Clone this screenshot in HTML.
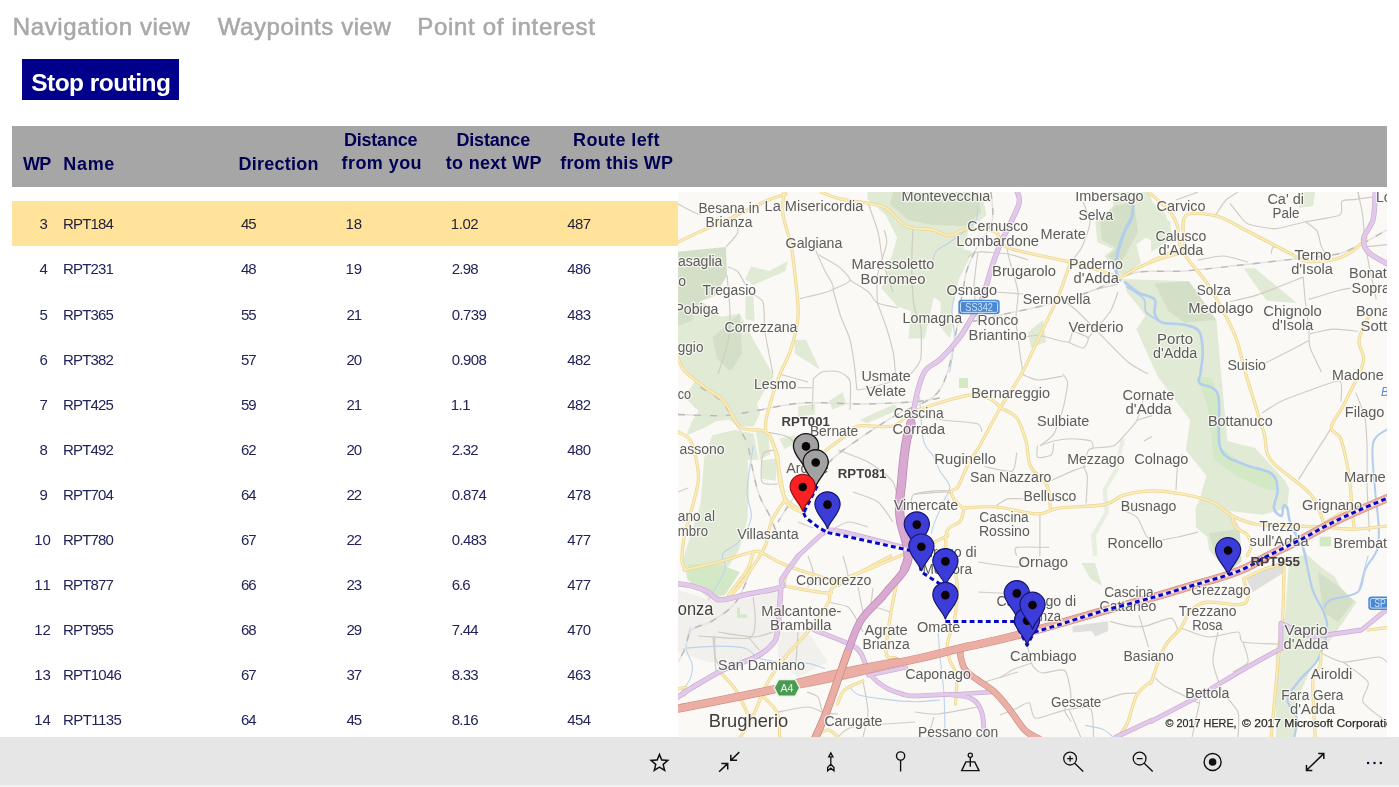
<!DOCTYPE html>
<html lang="en"><head><meta charset="utf-8"><title>Waypoints view</title>
<style>
*{margin:0;padding:0;box-sizing:border-box}
html,body{width:1399px;height:787px;overflow:hidden;background:#fff;font-family:"Liberation Sans",sans-serif}
#app{position:relative;width:1399px;height:787px;overflow:hidden;background:#fff;will-change:transform;opacity:0.9999}
.t{position:absolute;white-space:nowrap;line-height:1}
.tab{color:#a8a8a8;font-weight:400;-webkit-text-stroke:0.55px #a8a8a8}
.btn{color:#fff;font-weight:700}
.th{color:#000054;font-weight:700}
.td{color:#23235c;font-weight:400}
.td1{color:#221e34}
#stop{position:absolute;left:22px;top:59px;width:157px;height:41px;background:#00008b;border:0;padding:0;font:inherit;text-align:left;overflow:hidden}
#thead{position:absolute;left:12px;top:126px;width:1375px;height:61px;background:#a6a6a6}
#sel{position:absolute;left:12px;top:201px;width:666px;height:44.5px;background:#ffe39b}
#map{position:absolute;left:678px;top:192px;width:709px;height:545px;overflow:hidden;background:#f8f7f3}
#map svg{display:block}
#bar{position:absolute;left:0;top:737px;width:1399px;height:48.2px;background:#e6e6e6}
#barline{position:absolute;left:0;top:785.2px;width:1399px;height:1.8px;background:#f3f3f3}
#bar svg{position:absolute;left:0;top:0}
</style></head>
<body><div id="app">
<nav id="tabs">
<span class="t tab" style="left:12.70px;top:14.68px;font-size:24px;letter-spacing:0.654px">Navigation view</span>
<span class="t tab" style="left:217.70px;top:14.68px;font-size:24px;letter-spacing:0.562px">Waypoints view</span>
<span class="t tab" style="left:417.30px;top:14.68px;font-size:24px;letter-spacing:0.682px">Point of interest</span>
</nav>
<button id="stop" type="button"><span class="t btn" style="left:9.20px;top:11.76px;font-size:24.5px;letter-spacing:-0.530px">Stop routing</span></button>
<div id="thead"></div>
<span class="t th" style="left:23.00px;top:154.76px;font-size:18px;letter-spacing:-0.689px">WP</span>
<span class="t th" style="left:63.30px;top:154.76px;font-size:18px;letter-spacing:0.662px">Name</span>
<span class="t th" style="left:238.50px;top:154.76px;font-size:18px;letter-spacing:0.248px">Direction</span>
<span class="t th" style="left:343.90px;top:131.16px;font-size:18px;letter-spacing:-0.203px">Distance</span>
<span class="t th" style="left:341.60px;top:154.36px;font-size:18px;letter-spacing:0.428px">from you</span>
<span class="t th" style="left:456.40px;top:131.16px;font-size:18px;letter-spacing:-0.174px">Distance</span>
<span class="t th" style="left:445.80px;top:154.36px;font-size:18px;letter-spacing:0.301px">to next WP</span>
<span class="t th" style="left:573.00px;top:131.16px;font-size:18px;letter-spacing:0.378px">Route left</span>
<span class="t th" style="left:560.30px;top:154.36px;font-size:18px;letter-spacing:0.155px">from this WP</span>
<div id="sel"></div>
<div id="rows">
<span class="t td td1" style="left:39.41px;top:216.30px;font-size:15px;letter-spacing:0.000px">3</span>
<span class="t td td1" style="left:63.00px;top:216.30px;font-size:15px;letter-spacing:-0.849px">RPT184</span>
<span class="t td td1" style="left:241.00px;top:216.30px;font-size:15px;letter-spacing:-1.082px">45</span>
<span class="t td td1" style="left:345.60px;top:216.30px;font-size:15px;letter-spacing:-0.082px">18</span>
<span class="t td td1" style="left:450.70px;top:216.30px;font-size:15px;letter-spacing:-0.404px">1.02</span>
<span class="t td td1" style="left:567.30px;top:216.30px;font-size:15px;letter-spacing:-0.672px">487</span>
<span class="t td" style="left:39.41px;top:261.40px;font-size:15px;letter-spacing:0.000px">4</span>
<span class="t td" style="left:63.00px;top:261.40px;font-size:15px;letter-spacing:-0.849px">RPT231</span>
<span class="t td" style="left:241.00px;top:261.40px;font-size:15px;letter-spacing:-1.082px">48</span>
<span class="t td" style="left:345.60px;top:261.40px;font-size:15px;letter-spacing:-0.082px">19</span>
<span class="t td" style="left:451.70px;top:261.40px;font-size:15px;letter-spacing:-0.737px">2.98</span>
<span class="t td" style="left:567.30px;top:261.40px;font-size:15px;letter-spacing:-0.672px">486</span>
<span class="t td" style="left:39.41px;top:306.50px;font-size:15px;letter-spacing:0.000px">5</span>
<span class="t td" style="left:63.00px;top:306.50px;font-size:15px;letter-spacing:-0.849px">RPT365</span>
<span class="t td" style="left:241.00px;top:306.50px;font-size:15px;letter-spacing:-1.082px">55</span>
<span class="t td" style="left:346.60px;top:306.50px;font-size:15px;letter-spacing:-1.082px">21</span>
<span class="t td" style="left:451.70px;top:306.50px;font-size:15px;letter-spacing:-0.619px">0.739</span>
<span class="t td" style="left:567.30px;top:306.50px;font-size:15px;letter-spacing:-0.672px">483</span>
<span class="t td" style="left:39.41px;top:351.60px;font-size:15px;letter-spacing:0.000px">6</span>
<span class="t td" style="left:63.00px;top:351.60px;font-size:15px;letter-spacing:-0.849px">RPT382</span>
<span class="t td" style="left:241.00px;top:351.60px;font-size:15px;letter-spacing:-1.082px">57</span>
<span class="t td" style="left:346.60px;top:351.60px;font-size:15px;letter-spacing:-1.082px">20</span>
<span class="t td" style="left:451.70px;top:351.60px;font-size:15px;letter-spacing:-0.619px">0.908</span>
<span class="t td" style="left:567.30px;top:351.60px;font-size:15px;letter-spacing:-0.672px">482</span>
<span class="t td" style="left:39.41px;top:396.70px;font-size:15px;letter-spacing:0.000px">7</span>
<span class="t td" style="left:63.00px;top:396.70px;font-size:15px;letter-spacing:-0.849px">RPT425</span>
<span class="t td" style="left:241.00px;top:396.70px;font-size:15px;letter-spacing:-1.082px">59</span>
<span class="t td" style="left:346.60px;top:396.70px;font-size:15px;letter-spacing:-1.082px">21</span>
<span class="t td" style="left:450.70px;top:396.70px;font-size:15px;letter-spacing:-0.475px">1.1</span>
<span class="t td" style="left:567.30px;top:396.70px;font-size:15px;letter-spacing:-0.672px">482</span>
<span class="t td" style="left:39.41px;top:441.80px;font-size:15px;letter-spacing:0.000px">8</span>
<span class="t td" style="left:63.00px;top:441.80px;font-size:15px;letter-spacing:-0.849px">RPT492</span>
<span class="t td" style="left:241.00px;top:441.80px;font-size:15px;letter-spacing:-1.082px">62</span>
<span class="t td" style="left:346.60px;top:441.80px;font-size:15px;letter-spacing:-1.082px">20</span>
<span class="t td" style="left:451.70px;top:441.80px;font-size:15px;letter-spacing:-0.737px">2.32</span>
<span class="t td" style="left:567.30px;top:441.80px;font-size:15px;letter-spacing:-0.672px">480</span>
<span class="t td" style="left:39.41px;top:486.90px;font-size:15px;letter-spacing:0.000px">9</span>
<span class="t td" style="left:63.00px;top:486.90px;font-size:15px;letter-spacing:-0.849px">RPT704</span>
<span class="t td" style="left:241.00px;top:486.90px;font-size:15px;letter-spacing:-1.082px">64</span>
<span class="t td" style="left:346.60px;top:486.90px;font-size:15px;letter-spacing:-1.082px">22</span>
<span class="t td" style="left:451.70px;top:486.90px;font-size:15px;letter-spacing:-0.619px">0.874</span>
<span class="t td" style="left:567.30px;top:486.90px;font-size:15px;letter-spacing:-0.672px">478</span>
<span class="t td" style="left:34.37px;top:532.00px;font-size:15px;letter-spacing:-0.082px">10</span>
<span class="t td" style="left:63.00px;top:532.00px;font-size:15px;letter-spacing:-0.849px">RPT780</span>
<span class="t td" style="left:241.00px;top:532.00px;font-size:15px;letter-spacing:-1.082px">67</span>
<span class="t td" style="left:346.60px;top:532.00px;font-size:15px;letter-spacing:-1.082px">22</span>
<span class="t td" style="left:451.70px;top:532.00px;font-size:15px;letter-spacing:-0.619px">0.483</span>
<span class="t td" style="left:567.30px;top:532.00px;font-size:15px;letter-spacing:-0.672px">477</span>
<span class="t td" style="left:34.37px;top:577.10px;font-size:15px;letter-spacing:1.031px">11</span>
<span class="t td" style="left:63.00px;top:577.10px;font-size:15px;letter-spacing:-0.849px">RPT877</span>
<span class="t td" style="left:241.00px;top:577.10px;font-size:15px;letter-spacing:-1.082px">66</span>
<span class="t td" style="left:346.60px;top:577.10px;font-size:15px;letter-spacing:-1.082px">23</span>
<span class="t td" style="left:451.70px;top:577.10px;font-size:15px;letter-spacing:-0.975px">6.6</span>
<span class="t td" style="left:567.30px;top:577.10px;font-size:15px;letter-spacing:-0.672px">477</span>
<span class="t td" style="left:34.37px;top:622.20px;font-size:15px;letter-spacing:-0.082px">12</span>
<span class="t td" style="left:63.00px;top:622.20px;font-size:15px;letter-spacing:-0.849px">RPT955</span>
<span class="t td" style="left:241.00px;top:622.20px;font-size:15px;letter-spacing:-1.082px">68</span>
<span class="t td" style="left:346.60px;top:622.20px;font-size:15px;letter-spacing:-1.082px">29</span>
<span class="t td" style="left:451.70px;top:622.20px;font-size:15px;letter-spacing:-0.737px">7.44</span>
<span class="t td" style="left:567.30px;top:622.20px;font-size:15px;letter-spacing:-0.672px">470</span>
<span class="t td" style="left:34.37px;top:667.30px;font-size:15px;letter-spacing:-0.082px">13</span>
<span class="t td" style="left:63.00px;top:667.30px;font-size:15px;letter-spacing:-0.751px">RPT1046</span>
<span class="t td" style="left:241.00px;top:667.30px;font-size:15px;letter-spacing:-1.082px">67</span>
<span class="t td" style="left:346.60px;top:667.30px;font-size:15px;letter-spacing:-1.082px">37</span>
<span class="t td" style="left:451.70px;top:667.30px;font-size:15px;letter-spacing:-0.737px">8.33</span>
<span class="t td" style="left:567.30px;top:667.30px;font-size:15px;letter-spacing:-0.672px">463</span>
<span class="t td" style="left:34.37px;top:712.40px;font-size:15px;letter-spacing:-0.082px">14</span>
<span class="t td" style="left:63.00px;top:712.40px;font-size:15px;letter-spacing:-0.566px">RPT1135</span>
<span class="t td" style="left:241.00px;top:712.40px;font-size:15px;letter-spacing:-1.082px">64</span>
<span class="t td" style="left:346.60px;top:712.40px;font-size:15px;letter-spacing:-1.082px">45</span>
<span class="t td" style="left:451.70px;top:712.40px;font-size:15px;letter-spacing:-0.737px">8.16</span>
<span class="t td" style="left:567.30px;top:712.40px;font-size:15px;letter-spacing:-0.672px">454</span>
</div>
<div id="map">
<svg width="709" height="545" viewBox="0 0 709 545" font-family="Liberation Sans, sans-serif">
<rect width="709" height="545" fill="#faf9f6"/>
<path d="M0.0,398.0 L40.0,410.0 L76.0,405.0 L100.0,398.0 L98.0,440.0 L90.0,456.0 L70.0,470.0 L30.0,470.0 L0.0,460.0Z" fill="#f1f0ed"/>
<path d="M100.0,440.0 L130.0,440.0 L150.0,470.0 L120.0,485.0 L100.0,470.0Z" fill="#f1f0ed"/>
<path d="M567.3,384.8 L603.5,369.5 L605.4,381.0 L574.9,400.0Z" fill="#dfdfdd"/>
<path d="M394.6,434.1 L430.2,429.3 L430.2,439.0 L417.2,444.6 L414.0,439.0 L394.6,440.6Z" fill="#dfdfdd"/>
<path d="M0.0,59.7 L48.0,55.0 L49.0,83.7 L36.6,104.0 L22.9,108.9 L13.7,129.4 L0.0,134.0Z" fill="#d3e0c7"/>
<path d="M0.0,134.0 L13.7,129.4 L22.9,108.9 L43.4,124.9 L61.7,121.4 L75.4,147.7 L96.0,184.3 L86.9,198.0 L75.4,218.0 L50.3,218.0 L45.7,204.9 L22.9,198.0 L0.0,168.3Z" fill="#e0ead5"/>
<path d="M34.3,145.4 L61.7,121.4 L64.0,161.4 L52.6,179.7 L38.9,166.0Z" fill="#d3e0c7"/>
<path d="M73.1,74.6 L91.4,79.1 L109.7,68.9 L107.4,79.1 L75.4,92.9 L67.4,87.1Z" fill="#e0ead5"/>
<path d="M67.4,104.3 L75.4,104.3 L76.6,129.4 L67.4,127.1Z" fill="#e0ead5"/>
<path d="M116.6,147.7 L128.0,147.7 L141.7,177.4 L116.6,161.4Z" fill="#e0ead5"/>
<path d="M189.4,0.0 L303.8,0.0 L308.4,22.9 L290.0,38.9 L285.5,57.2 L294.7,59.5 L281.0,86.9 L274.0,119.0 L276.4,128.0 L271.8,146.4 L262.6,135.0 L262.6,109.8 L255.8,105.2 L246.6,146.4 L230.6,146.4 L232.9,119.0 L219.2,114.4 L203.2,96.0 L205.5,91.5 L219.2,45.7 L207.7,22.9 L189.4,6.9Z" fill="#e0ead5"/>
<path d="M215.0,0.0 L300.0,0.0 L303.0,20.0 L288.0,34.0 L255.0,33.0 L230.0,28.0 L212.0,12.0Z" fill="#d3e0c7"/>
<path d="M433.2,0.0 L472.0,0.0 L476.6,22.9 L492.6,29.7 L492.6,41.2 L478.9,50.3 L467.5,45.7 L458.3,52.6 L462.9,70.9 L444.6,84.6 L437.7,77.8 L426.3,64.0 L435.5,57.2 L419.4,50.3 L417.2,29.7 L435.5,13.7Z" fill="#e0ead5"/>
<path d="M437.0,14.0 L456.0,10.0 L460.0,40.0 L448.0,62.0 L440.0,75.0 L430.0,64.0 L438.0,56.0 L424.0,48.0 L422.0,30.0Z" fill="#d3e0c7"/>
<path d="M444.6,86.9 L510.9,89.2 L538.4,128.0 L543.0,180.0 L549.3,249.0 L577.0,256.0 L607.0,288.4 L611.1,297.1 L609.2,316.1 L584.5,322.8 L552.0,319.0 L517.7,316.1 L521.6,306.9 L528.5,283.7 L507.7,258.3 L512.3,228.2 L480.0,185.0 L458.3,137.2 L467.5,123.5 L449.2,100.6Z" fill="#e0ead5"/>
<path d="M476.6,91.5 L510.9,89.2 L538.4,128.0 L506.4,130.4 L490.4,119.0Z" fill="#d3e0c7"/>
<path d="M519.0,185.0 L533.0,185.0 L541.0,205.0 L543.0,256.0 L566.0,272.0 L594.0,282.0 L601.0,298.0 L590.0,298.0 L560.0,285.0 L536.0,268.0 L530.0,215.0Z" fill="#d3e9c6"/>
<path d="M517.7,316.1 L552.0,319.0 L561.6,335.2 L563.5,369.5 L550.1,381.0 L531.1,358.1 L529.2,344.7 L517.7,335.2Z" fill="#e0ead5"/>
<path d="M531.1,340.9 L561.6,337.1 L563.5,369.5 L550.0,380.0 L536.8,361.9Z" fill="#d3e0c7"/>
<path d="M473.0,9.0 L487.0,21.0 L496.0,46.0 L473.0,60.0Z" fill="#e0ead5"/>
<path d="M565.5,76.3 L577.0,76.3 L618.7,111.0 L588.6,108.7Z" fill="#e0ead5"/>
<path d="M621.0,0.0 L637.0,0.0 L635.0,14.0 L621.0,16.0Z" fill="#e0ead5"/>
<path d="M611.1,367.6 L628.3,361.9 L645.5,377.1 L656.9,384.8 L664.5,400.0 L678.8,410.2 L658.0,440.3 L634.9,472.7 L621.0,502.7 L616.4,545.0 L597.9,545.0 L597.9,456.5 L607.0,424.0 L609.4,392.0Z" fill="#e0ead5"/>
<path d="M640.0,380.0 L662.0,395.0 L676.0,409.0 L660.0,430.0 L645.0,420.0Z" fill="#d3e0c7"/>
<path d="M641.6,344.7 L653.1,344.7 L653.1,354.3 L641.6,354.3Z" fill="#d3e9c6"/>
<path d="M26.4,265.3 L69.1,256.1 L71.2,296.8 L69.1,329.3 L61.0,357.8 L40.7,390.3 L30.0,406.0 L10.0,388.0 L4.1,370.0 L22.4,313.0Z" fill="#e0ead5"/>
<path d="M83.4,268.3 L99.6,266.3 L97.6,288.7 L83.4,286.6Z" fill="#e0ead5"/>
<path d="M13.7,178.0 L89.2,178.0 L93.5,186.6 L82.3,195.2 L73.8,203.7 L78.9,212.3 L82.3,220.9 L75.5,234.6 L60.0,234.6 L51.5,227.8 L37.7,229.5 L25.7,236.3 L8.6,243.2 L13.7,229.5 L20.6,219.2 L6.9,205.4 L17.2,188.3Z" fill="#e0ead5"/>
<path d="M34.3,243.2 L56.6,238.0 L75.5,241.5 L80.6,268.0 L25.7,268.0Z" fill="#e0ead5"/>
<path d="M78.0,240.0 L90.0,240.0 L92.0,262.0 L82.0,268.0Z" fill="#e0ead5"/>
<path d="M120.1,214.0 L137.2,212.3 L137.2,222.6 L120.1,224.3Z" fill="#e0ead5"/>
<path d="M101.2,246.6 L116.7,243.2 L120.1,250.1 L106.4,256.9Z" fill="#e0ead5"/>
<path d="M151.0,208.9 L164.7,200.3 L168.1,212.3 L154.4,217.5Z" fill="#e0ead5"/>
<path d="M181.9,227.8 L216.2,212.3 L221.3,217.5 L188.7,231.2Z" fill="#e0ead5"/>
<path d="M10.2,372.0 L40.0,372.0 L62.0,380.0 L46.8,403.3 L34.6,405.3 L20.3,397.2 L9.2,387.0Z" fill="#d3e9c6"/>
<path d="M59.0,415.5 L62.0,415.5 L62.0,422.5 L69.1,422.5 L69.1,425.7 L59.0,425.7Z" fill="#d3e9c6"/>
<path d="M443.0,246.7 L447.0,246.7 L440.0,279.0 L429.0,298.0 L431.0,320.7 L418.0,343.8 L419.3,364.0 L415.0,364.0 L413.0,343.0 L426.6,320.0 L424.5,297.0 L436.0,278.0Z" fill="#e8efe0"/>
<path d="M403.5,371.0 L417.0,371.0 L424.0,394.0 L412.7,387.0Z" fill="#e0ead5"/>
<path d="M281.0,186.0 L290.0,186.0 L290.0,196.0 L281.0,196.0Z" fill="#d3e9c6"/>
<path d="M350.0,140.0 L365.0,128.0 L368.0,150.0 L353.0,156.0Z" fill="#e0ead5"/>
<g fill="none" stroke="#b3cdee" stroke-linecap="round" stroke-linejoin="round">
<path d="M454.9,13.7 C454.7,15.6 455.1,21.0 453.8,25.2 C452.5,29.4 449.2,33.2 446.9,38.9 C444.6,44.6 441.5,53.0 440.0,59.5 C438.5,66.0 437.3,73.0 437.7,77.8 C438.1,82.5 441.5,86.3 442.3,88.0" stroke-width="3.2"/>
<path d="M446.9,90.3 C449.2,92.0 455.7,97.7 460.6,100.6 C465.6,103.5 473.9,104.1 476.6,107.5 C479.3,110.9 475.5,117.4 476.6,121.2 C477.8,125.0 478.5,128.5 483.5,130.4 C488.5,132.3 500.1,131.2 506.4,132.7 C512.7,134.2 518.2,134.9 521.2,139.5 C524.2,144.1 524.5,153.0 524.7,160.1 C524.9,167.2 522.9,176.8 522.4,182.0 C521.9,187.2 518.7,187.7 521.6,191.2 C524.5,194.7 536.5,192.0 540.0,202.8 C543.5,213.6 538.1,244.4 542.4,256.0 C546.6,267.6 557.0,268.0 565.5,272.2 C574.0,276.4 587.5,277.2 593.2,281.4 C598.9,285.5 599.2,291.3 599.7,297.1 C600.2,302.9 595.3,311.7 595.9,316.1 C596.5,320.6 601.9,324.1 603.5,323.8 C605.1,323.5 604.4,315.5 605.4,314.2 C606.4,312.9 607.9,312.9 609.2,316.1 C610.5,319.3 610.5,326.9 613.0,333.3 C615.5,339.7 622.0,348.3 624.5,354.3 C627.0,360.3 627.7,367.0 628.3,369.5" stroke-width="2.6"/>
<path d="M449.0,95.0 C451.8,97.0 462.8,102.8 466.0,107.0 C469.2,111.2 465.1,116.1 468.0,120.0 C470.9,123.9 480.9,128.7 483.5,130.4" stroke-width="1.6"/>
<path d="M628.3,369.5 C629.4,374.4 631.9,390.0 634.9,398.7 C637.9,407.4 644.1,414.9 646.4,421.8 C648.7,428.7 649.9,432.6 648.7,440.3 C647.6,448.0 644.1,459.9 639.5,468.0 C634.9,476.1 626.0,482.3 621.0,488.9 C616.0,495.5 609.8,501.2 609.4,507.4 C609.0,513.6 617.5,519.6 618.7,525.9 C619.9,532.2 616.8,541.8 616.4,545.0" stroke-width="2.2"/>
<path d="M646.4,414.9 C647.5,413.7 647.5,410.1 653.1,407.6 C658.7,405.1 674.1,405.1 679.8,400.0 C685.5,394.9 684.2,384.1 687.4,377.1 C690.6,370.1 696.7,365.1 698.9,358.1 C701.1,351.1 701.1,345.4 700.8,335.2 C700.5,325.0 698.0,311.1 697.0,297.1 C696.0,283.1 693.0,261.3 695.0,251.4 C697.0,241.5 706.7,239.8 709.0,237.5" stroke-width="2.0"/>
</g>
<g fill="none" stroke="#bcd3ee" stroke-width="1.1" stroke-linecap="round">
<path d="M407.6,533.4 C410.6,534.1 420.7,535.6 425.3,537.5 C429.9,539.4 433.4,543.8 435.0,545.0"/>
<path d="M299.2,13.7 C298.8,16.4 301.6,23.6 297.0,29.7 C292.4,35.8 278.3,45.3 271.8,50.3 C265.3,55.3 261.1,55.3 258.0,59.5 C254.9,63.7 254.2,72.8 253.5,75.5"/>
<path d="M276.4,105.2 C276.0,107.5 274.0,112.1 274.0,119.0 C274.0,125.9 276.8,136.2 276.4,146.4 C276.0,156.6 272.6,174.4 271.8,180.0"/>
<path d="M241.6,205.0 C242.2,212.2 243.1,238.1 245.4,248.0 C247.7,257.9 252.8,259.2 255.5,264.3 C258.2,269.4 258.9,273.4 261.6,278.5 C264.3,283.6 271.1,289.7 271.8,294.8 C272.5,299.9 268.4,302.6 265.7,309.0 C263.0,315.4 257.5,328.0 255.5,333.4 C253.5,338.8 253.8,340.1 253.5,341.5"/>
<path d="M75.2,254.1 C74.2,261.6 69.4,286.9 69.1,298.8 C68.8,310.7 74.5,316.8 73.2,325.3 C71.9,333.8 65.8,343.5 61.0,349.6 C56.2,355.7 47.1,357.1 44.7,361.8 C42.3,366.6 49.2,370.4 46.8,378.1 C44.4,385.8 33.2,403.0 30.5,408.0"/>
<path d="M6.1,456.2 C11.9,455.9 30.5,454.1 40.7,454.1 C50.9,454.1 60.3,454.2 67.1,456.2 C73.9,458.2 74.9,463.9 81.3,466.3 C87.7,468.7 97.6,469.5 105.7,470.4 C113.8,471.2 123.3,470.4 130.1,471.4 C136.9,472.4 143.7,475.6 146.4,476.5"/>
<path d="M12.2,435.8 C11.5,439.2 7.8,450.1 8.1,456.2 C8.4,462.3 13.5,467.3 14.2,472.4 C14.9,477.5 13.9,482.2 12.2,486.6 C10.5,491.0 5.4,496.8 4.1,498.8"/>
<path d="M171.0,493.5 C172.6,495.0 174.1,500.4 180.3,502.7 C186.5,505.0 198.6,506.2 208.0,507.4 C217.4,508.6 228.0,509.6 237.0,509.7 C246.0,509.8 257.8,508.3 262.0,508.0"/>
<path d="M260.0,438.0 C260.4,443.0 261.4,457.2 262.4,468.0 C263.4,478.8 265.2,489.9 266.0,502.7 C266.8,515.5 266.8,538.0 267.0,545.0"/>
<path d="M690.0,364.0 L681.0,398.0"/>
</g>
<g fill="none" stroke="#cfccc4" stroke-width="1.15" stroke-linejoin="round">
<path d="M273.8,298.8 C271.9,298.8 262.1,298.3 257.6,298.8 C253.1,299.3 238.0,300.8 235.2,302.9 C232.4,305.0 233.4,315.4 233.2,317.1"/>
<path d="M36.6,444.0 C36.7,446.6 36.8,462.3 37.6,466.3 C38.4,470.3 43.0,477.1 43.7,478.5"/>
<path d="M20.3,444.0 C26.2,444.2 64.5,447.9 71.2,446.0 C77.9,444.1 76.8,432.4 77.3,427.7 C77.8,423.0 75.4,407.9 75.2,405.3"/>
<path d="M71.2,446.0 L81.3,458.2"/>
<path d="M50.0,75.0 C51.2,75.6 57.4,77.1 60.0,80.0 C62.6,82.9 69.1,96.5 72.0,100.0 C74.9,103.5 83.2,105.3 85.0,110.0 C86.8,114.7 85.8,131.6 87.0,140.0 C88.2,148.4 94.1,177.1 95.0,182.0"/>
<path d="M49.0,83.0 C49.4,87.3 51.9,112.2 52.0,120.0 C52.1,127.8 51.4,142.8 50.0,150.0 C48.6,157.2 41.2,178.3 40.0,182.0"/>
<path d="M0.0,12.0 C2.3,13.2 16.5,21.3 20.0,22.0 C23.5,22.7 28.8,18.5 30.0,18.0"/>
<path d="M55.0,25.0 C55.6,26.8 60.8,36.5 60.0,40.0 C59.2,43.5 49.4,53.2 48.0,55.0"/>
<path d="M190.0,11.0 C191.2,14.4 198.2,33.1 200.0,40.0 C201.8,46.9 203.2,63.0 205.0,70.0 C206.8,77.0 213.8,96.5 215.0,100.0"/>
<path d="M290.0,65.0 C291.2,64.4 295.3,60.4 300.0,60.0 C304.7,59.6 324.2,61.1 330.0,62.0 C335.8,62.9 347.7,67.3 350.0,68.0"/>
<path d="M300.0,60.0 C299.5,64.1 296.0,86.8 296.0,95.0 C296.0,103.2 299.5,125.9 300.0,130.0"/>
<path d="M329.0,57.0 C329.4,58.5 330.7,65.0 332.0,70.0 C333.3,75.0 339.3,93.0 340.0,100.0 C340.7,107.0 337.4,120.4 338.0,130.0 C338.6,139.6 344.2,175.9 345.0,182.0"/>
<path d="M318.0,100.0 L345.0,102.0"/>
<path d="M392.0,71.0 C393.4,69.1 401.7,59.8 404.0,55.0 C406.3,50.2 411.9,35.2 412.0,30.0 C412.1,24.8 405.8,12.3 405.0,10.0"/>
<path d="M380.0,104.0 C382.1,105.6 393.3,113.8 398.0,118.0 C402.7,122.2 413.9,133.9 420.0,140.0 C426.1,146.1 444.2,165.1 450.0,170.0 C455.8,174.9 467.7,180.6 470.0,182.0"/>
<path d="M412.0,99.0 L440.0,92.0"/>
<path d="M361.0,143.0 C364.4,143.8 386.0,150.3 390.0,150.0 C394.0,149.7 392.7,140.5 395.0,140.0 C397.3,139.5 408.8,144.1 410.0,146.0 C411.2,147.9 407.3,155.5 405.0,156.0 C402.7,156.5 391.8,150.7 390.0,150.0"/>
<path d="M345.0,145.0 L361.0,143.0"/>
<path d="M440.0,100.0 C439.1,102.3 435.5,114.6 432.0,120.0 C428.5,125.4 412.6,143.0 410.0,146.0"/>
<path d="M498.0,8.0 L520.0,0.0"/>
<path d="M537.0,24.0 C538.3,22.1 545.3,10.8 548.0,8.0 C550.7,5.2 558.6,0.9 560.0,0.0"/>
<path d="M520.0,68.0 C522.9,67.5 539.2,63.8 545.0,64.0 C550.8,64.2 567.1,69.3 570.0,70.0"/>
<path d="M498.0,298.0 C498.2,294.7 499.2,274.2 500.0,270.0 C500.8,265.8 504.4,262.9 505.0,262.0"/>
<path d="M473.0,350.0 C476.1,349.4 494.5,346.2 500.0,345.0 C505.5,343.8 517.7,340.6 520.0,340.0"/>
<path d="M300.0,370.0 C304.7,370.6 334.8,375.7 340.0,375.0 C345.2,374.3 344.4,365.3 345.0,364.0"/>
<path d="M300.0,400.0 L340.0,402.0"/>
<path d="M300.0,492.0 L340.0,480.0"/>
<path d="M237.0,520.0 C239.7,520.2 252.7,522.6 260.0,522.0 C267.4,521.4 295.3,515.8 300.0,515.0"/>
<path d="M250.0,545.0 L256.0,525.0"/>
<path d="M503.0,436.0 C506.1,437.1 523.4,444.5 530.0,445.0 C536.6,445.5 555.9,439.4 560.0,440.0 C564.1,440.6 560.3,448.6 565.0,450.0 C569.7,451.4 595.9,451.8 600.0,452.0"/>
<path d="M540.0,440.0 C539.4,443.5 534.4,463.0 535.0,470.0 C535.6,477.0 542.1,494.2 545.0,500.0 C547.9,505.8 558.2,514.8 560.0,520.0 C561.8,525.2 560.0,542.1 560.0,545.0"/>
<path d="M565.0,450.0 C565.6,452.3 571.2,466.5 570.0,470.0 C568.8,473.5 556.8,478.8 555.0,480.0"/>
<path d="M643.0,461.0 C645.6,462.1 658.4,469.5 665.0,470.0 C671.6,470.5 694.9,465.0 700.0,465.0 C705.1,465.0 708.0,469.4 709.0,470.0"/>
<path d="M665.0,470.0 C667.9,472.3 687.7,485.3 690.0,490.0 C692.3,494.7 682.8,505.3 685.0,510.0 C687.2,514.7 706.2,527.7 709.0,530.0"/>
<path d="M150.0,410.0 C152.3,410.6 166.5,412.7 170.0,415.0 C173.5,417.3 178.2,427.1 180.0,430.0 C181.8,432.9 184.4,438.8 185.0,440.0"/>
<path d="M186.0,418.0 C187.6,417.8 197.0,415.8 200.0,416.0 C203.0,416.2 210.6,419.5 212.0,420.0"/>
<path d="M120.0,440.0 L118.0,470.0"/>
<path d="M40.0,440.0 C44.1,440.6 68.6,445.0 75.0,445.0 C81.4,445.0 92.7,440.6 95.0,440.0"/>
<path d="M35.0,445.0 L38.0,480.0"/>
<path d="M129.0,500.0 C130.3,500.6 138.1,502.7 140.0,505.0 C141.9,507.3 142.7,518.0 145.0,520.0 C147.3,522.0 158.2,521.8 160.0,522.0"/>
<path d="M100.0,520.0 C103.5,519.4 124.6,514.9 130.0,515.0 C135.4,515.1 144.1,520.3 146.0,521.0"/>
<path d="M185.0,489.0 C185.6,492.6 190.0,513.5 190.0,520.0 C190.0,526.5 185.6,542.1 185.0,545.0"/>
<path d="M160.0,545.0 C161.8,543.8 166.0,536.8 175.0,535.0 C184.0,533.2 229.8,530.6 237.0,530.0"/>
<path d="M130.0,364.0 C130.6,365.9 135.0,376.4 135.0,380.0 C135.0,383.6 130.6,393.2 130.0,395.0"/>
<path d="M165.0,364.0 C165.6,366.4 170.6,381.4 170.0,385.0 C169.4,388.6 161.2,393.8 160.0,395.0"/>
<path d="M180.0,395.0 L185.0,420.0"/>
<path d="M195.0,396.0 L192.0,420.0"/>
<path d="M160.0,258.0 C163.5,259.4 183.6,266.3 190.0,270.0 C196.4,273.7 211.3,284.2 215.0,290.0 C218.7,295.8 221.2,316.5 222.0,320.0"/>
<path d="M175.0,300.0 C177.9,301.2 195.3,306.5 200.0,310.0 C204.7,313.5 213.2,327.7 215.0,330.0"/>
<path d="M150.0,340.0 C152.3,338.8 165.3,330.6 170.0,330.0 C174.7,329.4 187.7,334.4 190.0,335.0"/>
<path d="M101.0,182.0 L130.0,190.0"/>
<path d="M88.0,240.0 C90.6,240.6 105.7,242.7 110.0,245.0 C114.3,247.3 123.2,258.2 125.0,260.0"/>
<path d="M97.0,258.0 C95.6,258.5 86.5,258.3 85.0,262.0 C83.5,265.7 82.2,286.5 84.0,290.0 C85.8,293.5 98.1,291.8 100.0,292.0"/>
<path d="M0.0,300.0 L10.0,296.0"/>
<path d="M120.0,330.0 L135.0,336.0"/>
<path d="M237.0,223.6 C240.5,224.1 259.7,227.3 267.0,228.2 C274.3,229.1 295.1,230.3 299.4,231.7 C303.7,233.1 303.5,238.9 304.0,239.8"/>
<path d="M385.0,182.0 C385.5,183.1 389.6,187.2 389.6,191.2 C389.6,195.2 386.6,210.8 385.0,216.7 C383.4,222.6 378.4,237.8 375.7,242.1 C373.0,246.4 363.5,252.3 361.9,253.7"/>
<path d="M361.9,253.7 C363.5,253.2 371.9,249.8 375.7,249.0 C379.5,248.2 389.9,246.7 394.2,246.7 C398.5,246.7 410.3,247.9 412.7,249.0 C415.1,250.1 415.3,254.9 415.0,256.0 C414.7,257.1 411.5,256.1 410.4,258.3 C409.3,260.5 405.9,271.5 405.8,274.5 C405.7,277.5 409.0,279.4 409.3,283.7 C409.6,288.0 408.2,308.3 408.1,311.5"/>
<path d="M415.0,256.0 C417.4,255.7 432.0,255.3 435.8,253.7 C439.6,252.1 444.7,245.1 447.4,242.1 C450.1,239.1 456.8,232.5 459.0,228.2 C461.2,223.9 465.1,207.8 465.9,205.1"/>
<path d="M359.5,253.7 C359.5,255.0 357.9,264.1 359.5,265.2 C361.1,266.3 371.5,264.5 373.4,262.9 C375.3,261.3 375.4,252.7 375.7,251.4"/>
<path d="M338.7,260.6 C338.2,262.8 337.9,277.5 334.1,279.1 C330.3,280.7 309.6,275.0 306.4,274.5"/>
<path d="M373.4,288.4 C375.8,287.3 390.2,280.7 394.2,279.1 C398.2,277.5 406.5,275.0 408.1,274.5"/>
<path d="M237.0,302.2 C240.5,301.9 262.7,299.9 267.0,299.9 C271.3,299.9 273.2,301.9 274.0,302.2"/>
<path d="M317.9,313.8 C319.3,313.0 326.3,307.7 329.5,306.9 C332.7,306.1 343.8,306.9 345.7,306.9"/>
<path d="M361.9,323.0 L361.9,364.0"/>
<path d="M338.7,364.0 C338.7,363.0 334.9,356.4 338.7,355.4 C342.5,354.4 367.2,355.4 371.0,355.4"/>
<path d="M445.0,318.4 C446.6,319.2 456.3,322.4 459.0,325.4 C461.7,328.4 466.4,341.1 468.2,343.8 C469.9,346.5 473.3,348.0 474.0,348.5"/>
<path d="M465.9,249.0 L474.0,244.4"/>
<path d="M459.0,228.2 L474.0,223.6"/>
<path d="M343.4,182.0 C345.3,182.7 355.1,187.8 360.0,188.0 C364.9,188.2 382.1,184.5 385.0,184.0"/>
<path d="M349.4,453.5 C350.0,455.8 352.6,469.7 354.3,472.9 C356.0,476.1 360.2,480.3 364.0,481.0 C367.8,481.7 383.2,475.7 386.6,478.5 C390.0,481.3 393.0,500.6 393.0,505.2 C393.0,509.8 386.6,515.3 386.6,518.1 C386.6,520.9 392.3,528.1 393.0,529.4"/>
<path d="M322.0,485.8 C323.5,484.9 331.3,479.4 334.9,477.7 C338.5,476.0 350.6,472.0 352.7,471.3"/>
<path d="M423.7,508.4 C426.1,507.6 440.6,502.8 444.7,501.9 C448.8,501.0 457.5,501.2 459.2,501.1"/>
<path d="M322.0,522.9 C323.9,522.2 334.7,517.9 338.1,516.5 C341.5,515.1 348.8,509.7 351.1,510.8 C353.4,511.9 353.4,525.3 357.5,526.2 C361.6,527.1 380.2,519.2 386.6,518.1 C393.0,517.0 409.0,513.4 412.4,516.5 C415.8,519.6 415.2,541.7 415.6,545.0"/>
<path d="M391.4,518.1 L402.7,545.0"/>
<path d="M477.0,485.8 C478.1,486.7 482.8,491.6 486.6,493.9 C490.4,496.2 505.1,503.1 509.2,505.2 C513.3,507.3 520.5,510.9 522.0,511.6"/>
<path d="M460.8,422.8 C461.4,424.7 464.6,435.2 465.7,439.0 C466.8,442.8 469.9,453.2 470.5,455.1"/>
<path d="M431.8,429.3 C434.1,429.9 447.0,433.5 451.1,434.1 C455.2,434.7 462.4,435.0 467.3,434.1 C472.2,433.2 489.3,425.7 493.1,426.1 C496.9,426.5 498.8,436.1 499.6,437.4"/>
<path d="M522.0,508.4 L514.1,545.0"/>
<path d="M552.0,11.4 C553.1,12.7 559.0,20.5 561.1,22.9 C563.2,25.3 566.0,30.4 570.3,32.0 C574.6,33.6 591.0,36.9 597.7,36.6 C604.4,36.3 619.9,31.3 627.4,29.7 C634.9,28.1 657.4,25.3 661.7,22.9 C666.0,20.5 661.9,11.0 664.0,9.1 C666.1,7.2 678.1,8.0 680.0,6.9 C681.9,5.8 680.0,0.8 680.0,0.0"/>
<path d="M627.4,29.7 C628.7,30.8 637.0,36.0 638.9,38.9 C640.8,41.8 642.3,52.2 643.4,54.9 C644.5,57.6 647.5,60.9 648.0,61.7"/>
<path d="M680.0,6.9 L698.3,4.6"/>
<path d="M680.0,0.0 C680.5,2.7 683.8,17.3 684.6,22.9 C685.4,28.5 686.1,41.9 686.9,48.0 C687.7,54.1 690.1,68.5 691.4,75.4 C692.7,82.3 697.5,103.7 698.3,107.4"/>
<path d="M552.0,109.7 C555.2,108.9 571.4,105.6 579.4,102.9 C587.4,100.2 615.3,89.0 620.6,86.9 C625.9,84.8 624.6,84.9 625.1,84.6"/>
<path d="M625.1,84.6 C625.4,87.5 626.7,103.6 627.4,109.7 C628.1,115.8 630.4,131.8 630.9,137.1 C631.4,142.4 630.5,150.4 632.0,155.4 C633.5,160.4 642.1,177.1 643.4,180.0"/>
<path d="M630.9,107.4 C634.5,106.3 656.8,99.6 661.7,98.3 C666.6,97.0 671.8,96.3 673.1,96.0"/>
<path d="M632.0,141.7 C634.7,141.2 649.3,137.4 654.9,137.1 C660.5,136.8 677.1,139.1 680.0,139.4"/>
<path d="M586.3,171.4 C589.0,170.1 603.9,162.7 609.1,160.0 C614.3,157.3 628.4,149.9 630.9,148.6"/>
<path d="M593.1,61.7 C593.4,60.9 593.8,55.4 595.4,54.9 C597.0,54.4 605.6,56.8 606.9,57.1"/>
<path d="M686.9,54.9 L709.0,52.6"/>
<path d="M584.0,221.1 C586.1,219.8 596.7,212.4 602.3,209.7 C607.9,207.0 625.1,200.7 632.0,198.3 C638.9,195.9 658.1,187.8 661.7,189.1 C665.3,190.4 662.8,207.3 662.9,209.7"/>
<path d="M620.6,287.4 L652.6,237.1"/>
<path d="M677.7,200.6 C678.8,203.5 685.6,219.3 686.9,225.7 C688.2,232.1 688.8,247.4 689.1,255.4 C689.4,263.4 688.8,284.4 689.1,294.3 C689.4,304.2 691.1,334.7 691.4,340.0"/>
<path d="M137.7,58.6 C138.8,61.0 144.9,74.6 146.9,79.1 C148.9,83.6 157.8,94.2 154.9,97.4 C152.0,100.6 125.6,105.5 121.7,106.6"/>
<path d="M141.1,63.1 C143.4,64.4 157.0,71.7 160.6,74.6 C164.2,77.5 172.7,85.6 172.0,88.3 C171.3,91.0 156.9,96.3 154.9,97.4"/>
<path d="M172.0,88.3 C174.1,89.6 187.1,97.0 190.3,99.7 C193.5,102.4 195.9,109.2 199.4,111.1 C202.9,113.0 217.6,115.2 220.0,115.7"/>
<path d="M154.9,97.4 C155.8,100.6 160.9,119.0 162.9,124.9 C164.9,130.8 170.4,141.8 172.0,147.7 C173.6,153.6 175.8,169.2 176.6,175.1 C177.4,181.0 178.6,195.3 178.9,198.0"/>
<path d="M199.4,111.1 C200.5,114.0 206.7,130.4 208.6,136.3 C210.5,142.2 214.3,155.8 215.4,161.4 C216.5,167.0 217.4,181.6 217.7,184.3"/>
<path d="M206.3,38.0 C206.6,39.6 209.4,46.4 208.6,51.7 C207.8,57.0 200.5,76.8 199.4,83.7 C198.3,90.6 199.4,107.9 199.4,111.1"/>
<path d="M135.4,186.6 C136.5,185.8 141.7,180.5 144.6,179.7 C147.5,178.9 157.4,178.6 160.6,179.7 C163.8,180.8 170.7,184.4 172.0,188.9 C173.3,193.4 172.0,214.6 172.0,218.0"/>
<path d="M135.4,186.6 L134.3,218.0"/>
<path d="M119.4,195.7 L134.3,195.7"/>
<path d="M178.9,198.0 C180.5,197.7 186.7,197.3 192.6,195.7 C198.5,194.1 223.8,186.7 229.1,184.3 C234.4,181.9 237.2,176.2 238.3,175.1"/>
<path d="M234.9,38.0 C234.8,42.0 233.6,63.5 233.7,72.3 C233.8,81.1 234.9,105.9 236.0,113.4 C237.1,120.9 242.1,130.2 242.9,136.3 C243.7,142.4 243.4,161.5 242.9,166.0 C242.4,170.5 238.8,174.0 238.3,175.1"/>
</g>
<g fill="none" stroke="#e3e2df" stroke-width="1.5">
<path d="M313.0,0.0 C313.2,5.0 316.3,20.5 314.0,29.7 C311.7,38.9 303.4,46.9 299.2,54.9 C295.0,62.9 291.3,71.0 289.0,77.8 C286.7,84.6 286.8,89.1 285.5,96.0 C284.2,102.9 282.1,112.1 281.0,119.0 C279.9,125.9 280.6,127.0 278.7,137.2 C276.8,147.4 273.4,168.7 269.5,180.0 C265.6,191.3 264.1,197.5 255.0,205.0 C245.9,212.5 230.5,215.5 215.0,224.8 C199.5,234.1 173.7,251.6 161.8,260.6 C149.9,269.6 150.4,272.4 143.4,279.0 C136.4,285.6 127.2,291.5 120.0,300.0 C112.8,308.5 103.3,325.0 100.0,330.0"/>
<path d="M294.8,129.5 C300.6,128.2 317.6,124.1 329.5,121.4 C341.4,118.7 352.6,117.0 366.5,113.3 C380.4,109.6 400.8,103.6 412.7,99.4 C424.6,95.2 429.7,91.2 437.7,88.0 C445.7,84.8 449.2,81.5 460.6,80.0 C472.1,78.5 488.9,80.1 506.4,78.9 C523.9,77.7 547.2,74.8 565.5,72.8 C583.8,70.8 601.0,68.7 616.4,67.0 C631.8,65.3 647.2,64.7 658.0,62.4 C668.8,60.1 672.5,57.3 681.0,53.2 C689.5,49.1 704.3,40.5 709.0,38.0"/>
<path d="M0.0,222.5 C7.7,222.7 33.5,224.2 46.2,223.6 C58.9,223.0 63.2,221.1 76.3,219.0 C89.4,216.9 106.8,212.1 124.9,210.9 C143.0,209.7 166.3,212.2 185.0,212.0 C203.7,211.8 224.2,210.7 237.0,209.7 C249.8,208.7 257.8,206.6 262.0,206.0"/>
<path d="M22.3,195.2 C25.7,197.5 37.2,203.2 42.9,208.9 C48.6,214.6 52.3,222.6 56.6,229.5 C60.9,236.4 65.7,242.6 68.6,250.1 C71.5,257.6 72.0,265.8 74.0,274.5 C76.0,283.2 77.8,293.7 80.9,302.2 C84.0,310.7 89.3,318.3 92.5,325.4 C95.7,332.5 98.8,341.7 100.0,345.0"/>
<path d="M74.0,375.6 C71.3,381.4 64.3,401.4 57.8,410.2 C51.2,419.0 42.0,424.1 34.7,428.7 C27.4,433.3 18.5,433.4 13.9,438.0 C9.3,442.6 9.3,451.2 7.0,456.5 C4.7,461.8 1.2,467.8 0.0,470.0"/>
</g><g fill="none" stroke="#b9b9b7" stroke-width="1.4" stroke-dasharray="7 9">
<path d="M313.0,0.0 C313.2,5.0 316.3,20.5 314.0,29.7 C311.7,38.9 303.4,46.9 299.2,54.9 C295.0,62.9 291.3,71.0 289.0,77.8 C286.7,84.6 286.8,89.1 285.5,96.0 C284.2,102.9 282.1,112.1 281.0,119.0 C279.9,125.9 280.6,127.0 278.7,137.2 C276.8,147.4 273.4,168.7 269.5,180.0 C265.6,191.3 264.1,197.5 255.0,205.0 C245.9,212.5 230.5,215.5 215.0,224.8 C199.5,234.1 173.7,251.6 161.8,260.6 C149.9,269.6 150.4,272.4 143.4,279.0 C136.4,285.6 127.2,291.5 120.0,300.0 C112.8,308.5 103.3,325.0 100.0,330.0"/>
<path d="M294.8,129.5 C300.6,128.2 317.6,124.1 329.5,121.4 C341.4,118.7 352.6,117.0 366.5,113.3 C380.4,109.6 400.8,103.6 412.7,99.4 C424.6,95.2 429.7,91.2 437.7,88.0 C445.7,84.8 449.2,81.5 460.6,80.0 C472.1,78.5 488.9,80.1 506.4,78.9 C523.9,77.7 547.2,74.8 565.5,72.8 C583.8,70.8 601.0,68.7 616.4,67.0 C631.8,65.3 647.2,64.7 658.0,62.4 C668.8,60.1 672.5,57.3 681.0,53.2 C689.5,49.1 704.3,40.5 709.0,38.0"/>
<path d="M0.0,222.5 C7.7,222.7 33.5,224.2 46.2,223.6 C58.9,223.0 63.2,221.1 76.3,219.0 C89.4,216.9 106.8,212.1 124.9,210.9 C143.0,209.7 166.3,212.2 185.0,212.0 C203.7,211.8 224.2,210.7 237.0,209.7 C249.8,208.7 257.8,206.6 262.0,206.0"/>
<path d="M22.3,195.2 C25.7,197.5 37.2,203.2 42.9,208.9 C48.6,214.6 52.3,222.6 56.6,229.5 C60.9,236.4 65.7,242.6 68.6,250.1 C71.5,257.6 72.0,265.8 74.0,274.5 C76.0,283.2 77.8,293.7 80.9,302.2 C84.0,310.7 89.3,318.3 92.5,325.4 C95.7,332.5 98.8,341.7 100.0,345.0"/>
<path d="M74.0,375.6 C71.3,381.4 64.3,401.4 57.8,410.2 C51.2,419.0 42.0,424.1 34.7,428.7 C27.4,433.3 18.5,433.4 13.9,438.0 C9.3,442.6 9.3,451.2 7.0,456.5 C4.7,461.8 1.2,467.8 0.0,470.0"/>
</g>
<g fill="none" stroke="#ecd592" stroke-width="3.2" stroke-linecap="round" stroke-linejoin="round">
<path d="M646.9,330.9 C650.1,329.0 660.8,322.4 666.3,319.4 C671.8,316.3 677.7,313.7 680.0,312.6"/>
<path d="M160.0,389.0 C164.8,387.2 177.3,382.6 188.5,378.1 C199.7,373.6 216.2,366.2 227.0,361.8 C237.8,357.4 246.4,354.8 253.5,351.7 C260.6,348.6 267.1,344.9 269.8,343.5"/>
<path d="M106.0,0.0 C105.8,3.8 103.8,14.2 105.0,23.0 C106.2,31.8 110.8,41.5 113.0,53.0 C115.2,64.5 116.8,80.0 118.0,92.0 C119.2,104.0 120.8,114.2 120.0,125.0 C119.2,135.8 116.0,147.5 113.0,157.0 C110.0,166.5 105.0,174.4 102.0,182.0 C99.0,189.6 97.1,195.1 94.8,202.8 C92.5,210.5 89.1,222.0 87.9,228.2 C86.8,234.4 87.9,237.9 87.9,239.8"/>
<path d="M0.0,50.0 C4.7,47.8 18.8,41.2 28.0,37.0 C37.2,32.8 45.0,29.7 55.0,25.0 C65.0,20.3 79.2,12.8 88.0,9.0 C96.8,5.2 104.7,3.2 108.0,2.0"/>
<path d="M143.0,0.0 C146.2,1.2 155.0,5.2 162.0,6.9 C169.0,8.6 177.3,8.8 184.9,10.3 C192.5,11.8 200.5,12.0 207.7,16.0 C214.9,20.0 220.7,30.7 228.3,34.3 C235.9,37.9 246.2,36.2 253.5,37.7 C260.8,39.2 265.7,43.7 271.8,43.5 C277.9,43.3 282.4,37.2 290.0,36.6 C297.6,36.0 310.9,36.9 317.5,40.0 C324.1,43.1 317.5,50.6 329.5,55.5 C341.5,60.4 374.2,65.6 389.6,69.4 C405.0,73.2 413.2,75.9 422.0,78.6 C430.8,81.3 438.9,84.6 442.3,85.8"/>
<path d="M442.3,85.8 C445.4,84.1 453.7,78.8 460.6,75.5 C467.5,72.2 477.0,68.6 483.5,66.3 C490.0,64.0 495.7,63.7 499.5,61.8 C503.3,59.9 505.2,56.0 506.4,54.9"/>
<path d="M392.0,71.7 C390.1,77.1 385.4,92.0 380.4,104.0 C375.4,116.0 368.1,130.4 361.9,143.4 C355.7,156.4 350.0,170.0 343.4,182.0 C336.8,194.0 329.4,203.6 322.5,215.5 C315.6,227.4 307.1,244.2 301.7,253.7 C296.3,263.2 293.7,265.5 290.1,272.4 C286.5,279.2 282.6,290.4 279.9,294.8 C277.2,299.2 274.5,296.8 273.8,298.8 C273.1,300.8 273.9,303.9 275.9,307.0 C277.9,310.1 284.3,315.4 286.0,317.1"/>
<path d="M470.9,0.0 C474.5,3.4 487.8,14.9 492.6,20.6 C497.4,26.3 498.0,29.0 499.5,34.3 C501.0,39.6 499.9,46.9 501.8,52.6 C503.7,58.3 506.3,62.1 510.9,68.6 C515.5,75.1 523.1,82.3 529.2,91.5 C535.3,100.7 542.5,114.0 547.5,123.5 C552.5,133.0 555.6,138.9 559.0,148.7 C562.4,158.4 564.8,171.4 567.8,182.0 C570.8,192.6 573.9,202.0 577.0,212.0 C580.1,222.0 583.6,232.6 586.3,242.0 C589.0,251.4 585.5,258.7 593.2,268.7 C600.9,278.7 623.6,291.5 632.5,302.2 C641.4,312.9 644.1,327.9 646.4,333.0"/>
<path d="M506.4,52.6 C506.6,47.8 502.2,28.8 507.5,24.0 C512.8,19.2 528.7,21.8 538.4,24.0 C548.1,26.2 552.5,30.4 565.5,37.0 C578.5,43.6 605.6,58.2 616.4,63.6 C627.2,69.0 623.3,68.8 630.2,69.4 C637.1,70.0 650.3,68.9 658.0,67.0 C665.7,65.1 671.5,61.3 676.5,57.8 C681.5,54.3 686.1,48.1 688.0,46.2"/>
<path d="M473.0,69.4 L496.0,59.0"/>
<path d="M690.3,124.9 C688.8,128.8 681.8,141.1 681.0,148.0 C680.2,154.9 685.7,160.8 685.7,166.5 C685.7,172.2 682.4,178.2 681.0,182.0 C679.6,185.8 680.3,183.6 677.6,189.0 C674.9,194.4 669.0,206.7 664.9,214.4 C660.8,222.1 653.7,229.8 653.3,235.2 C652.9,240.6 659.9,240.1 662.6,246.7 C665.3,253.2 667.9,266.7 669.5,274.5 C671.1,282.3 671.5,286.4 672.2,293.3 C673.0,300.2 673.4,309.1 674.0,316.1 C674.6,323.1 675.7,332.0 676.0,335.2"/>
<path d="M0.0,166.0 C1.2,168.3 2.3,174.8 6.9,179.7 C11.5,184.6 20.8,190.7 27.4,195.7 C34.0,200.7 40.4,203.1 46.2,209.7 C52.0,216.3 55.4,230.2 62.4,235.2 C69.3,240.2 82.1,236.0 87.9,239.8 C93.7,243.7 94.3,249.4 97.0,258.3 C99.7,267.2 102.0,284.1 104.0,293.0 C106.0,301.9 105.2,306.9 108.7,311.5 C112.2,316.1 122.2,319.2 124.9,320.7"/>
<path d="M0.0,239.8 C2.0,241.2 9.1,243.2 12.2,248.0 C15.2,252.8 16.9,261.5 18.3,268.3 C19.7,275.1 21.0,280.9 20.3,288.7 C19.6,296.5 16.6,305.6 14.2,315.1 C11.8,324.6 7.8,336.5 6.1,345.6 C4.4,354.8 3.8,364.6 4.1,370.0 C4.4,375.4 7.4,376.7 8.1,378.0"/>
<path d="M6.1,378.1 C11.9,376.8 29.2,373.1 40.7,370.0 C52.2,366.9 67.8,361.2 75.2,359.8 C82.7,358.4 79.6,359.4 85.4,361.8 C91.2,364.2 97.4,369.2 109.8,374.0 C122.2,378.8 151.6,387.6 160.0,390.3"/>
<path d="M91.5,243.0 C92.8,246.6 97.9,256.7 99.6,264.3 C101.3,271.9 100.2,281.6 101.6,288.7 C102.9,295.8 104.0,301.9 107.7,307.0 C111.4,312.1 121.3,317.2 124.0,319.2"/>
<path d="M107.7,307.0 C105.3,310.7 96.9,321.5 93.5,329.3 C90.1,337.1 90.5,346.2 87.4,353.7 C84.4,361.1 79.6,367.2 75.2,374.0 C70.8,380.8 65.7,388.7 61.0,394.4 C56.3,400.1 49.2,405.7 46.8,408.0"/>
<path d="M75.2,359.8 C74.2,362.9 73.2,371.0 69.1,378.1 C65.0,385.2 53.8,398.4 50.8,402.5"/>
<path d="M109.8,374.0 L105.7,394.4"/>
<path d="M0.0,496.8 C1.3,496.6 7.1,494.8 8.1,495.8 C9.1,496.8 6.4,501.8 6.1,503.0"/>
<path d="M148.0,258.3 C151.1,256.0 161.1,248.5 166.5,244.4 C171.9,240.3 172.2,235.7 180.3,234.0 C188.4,232.3 205.6,236.5 215.0,234.0 C224.4,231.5 224.1,224.2 237.0,219.0 C249.9,213.8 279.8,204.7 292.5,202.8 C305.2,200.9 308.3,205.3 313.3,207.4 C318.3,209.5 318.3,212.4 322.5,215.5 C326.7,218.6 334.4,220.3 338.7,225.9 C342.9,231.5 345.7,240.9 348.0,249.0 C350.3,257.1 349.1,267.2 352.6,274.5 C356.1,281.8 365.5,286.1 368.8,293.0 C372.1,299.9 371.7,312.2 372.3,316.0"/>
<path d="M285.6,316.1 C291.0,315.9 305.6,314.0 317.9,315.0 C330.2,316.0 349.1,321.7 359.5,321.9 C369.9,322.1 369.1,317.7 380.3,316.1 C391.5,314.6 415.8,314.7 426.6,312.6 C437.4,310.5 437.3,305.7 445.0,303.4 C452.7,301.1 462.9,299.0 473.0,298.8 C483.1,298.6 495.1,300.3 505.4,302.2 C515.7,304.1 526.8,306.8 534.9,310.4 C543.0,314.0 546.6,320.1 553.9,323.8 C561.2,327.5 570.4,330.7 578.7,332.3 C587.0,333.9 592.4,332.8 603.5,333.3 C614.6,333.8 633.4,334.6 645.5,335.2 C657.6,335.8 665.4,337.3 676.0,337.1 C686.6,336.9 703.5,334.5 709.0,334.0"/>
<path d="M286.0,317.1 C285.3,319.1 284.7,325.9 282.0,329.3 C279.3,332.7 272.2,333.4 269.8,337.5 C267.4,341.6 267.7,349.6 267.7,353.7 C267.7,357.8 268.0,356.2 269.8,361.8 C271.6,367.4 277.3,377.0 278.6,387.0 C279.9,397.0 279.0,411.0 277.5,421.8 C276.0,432.6 270.4,444.2 269.4,451.9 C268.4,459.6 270.2,462.6 271.7,468.0 C273.2,473.4 277.6,476.9 278.6,484.2 C279.6,491.5 277.7,507.4 277.5,512.0"/>
<path d="M553.9,323.8 C554.5,325.7 555.2,332.0 557.8,335.2 C560.3,338.4 566.7,339.6 569.2,342.8 C571.7,346.0 573.0,350.8 573.0,354.3 C573.0,357.8 569.8,362.2 569.2,363.8"/>
<path d="M106.4,394.0 C113.7,395.2 141.8,401.0 150.3,401.0 C158.8,401.0 146.8,400.2 157.2,394.0 C167.6,387.8 203.4,369.0 212.7,364.0"/>
<path d="M150.3,401.0 C150.3,402.5 153.8,403.6 150.3,410.2 C146.8,416.8 136.8,431.1 129.5,440.3 C122.2,449.6 113.3,456.8 106.4,465.7 C99.5,474.6 92.9,484.2 87.9,493.5 C82.9,502.8 80.5,512.6 76.3,521.2 C72.0,529.8 64.7,541.0 62.4,545.0"/>
<path d="M41.6,479.6 C44.3,482.7 53.2,491.2 57.8,498.1 C62.4,505.0 67.5,517.4 69.4,521.2"/>
<path d="M85.5,505.0 C87.8,507.7 96.7,514.5 99.4,521.2 C102.1,527.9 101.3,541.0 101.7,545.0"/>
<path d="M219.7,387.0 C218.5,392.8 214.6,409.5 212.7,421.8 C210.8,434.1 207.2,453.7 208.0,461.0 C208.8,468.3 215.8,464.9 217.3,465.7"/>
<path d="M159.5,512.0 C160.7,509.7 162.2,501.9 166.5,498.0 C170.8,494.1 181.9,490.4 185.0,488.9"/>
<path d="M136.0,545.0 C138.3,543.8 146.0,538.0 150.0,538.0 C154.0,538.0 158.3,543.8 160.0,545.0"/>
<path d="M474.0,488.9 C471.5,491.2 463.1,495.8 459.0,502.7 C454.9,509.6 452.8,523.5 449.7,530.5 C446.6,537.5 442.0,542.6 440.5,545.0"/>
<path d="M606.0,375.6 C605.8,383.3 605.6,408.3 604.8,421.8 C604.0,435.3 602.4,444.6 601.3,456.5 C600.1,468.4 599.2,478.8 597.9,493.5 C596.5,508.2 594.0,536.4 593.2,545.0"/>
<path d="M565.5,387.0 C568.6,385.5 577.2,380.5 584.0,377.9 C590.8,375.3 602.3,372.5 606.0,371.4"/>
<path d="M565.5,387.0 C566.2,390.1 570.8,401.3 570.0,405.6 C569.2,409.9 567.8,411.8 560.9,412.6 C554.0,413.4 536.6,409.1 528.5,410.2 C520.4,411.3 516.5,415.2 512.3,419.5 C508.0,423.8 507.2,429.9 503.0,435.7 C498.8,441.5 491.5,446.1 486.9,454.2 C482.3,462.3 477.6,478.0 475.3,484.2 C473.0,490.4 473.4,490.0 473.0,491.2"/>
<path d="M643.0,461.0 C642.8,463.3 643.1,470.8 641.8,475.0 C640.4,479.2 635.7,474.8 634.9,486.5 C634.1,498.2 636.8,535.2 637.2,545.0"/>
<path d="M709.0,435.7 L690.3,438.0"/>
</g><g fill="none" stroke="#fbedb8" stroke-width="1.7" stroke-linecap="round" stroke-linejoin="round">
<path d="M646.9,330.9 C650.1,329.0 660.8,322.4 666.3,319.4 C671.8,316.3 677.7,313.7 680.0,312.6"/>
<path d="M160.0,389.0 C164.8,387.2 177.3,382.6 188.5,378.1 C199.7,373.6 216.2,366.2 227.0,361.8 C237.8,357.4 246.4,354.8 253.5,351.7 C260.6,348.6 267.1,344.9 269.8,343.5"/>
<path d="M106.0,0.0 C105.8,3.8 103.8,14.2 105.0,23.0 C106.2,31.8 110.8,41.5 113.0,53.0 C115.2,64.5 116.8,80.0 118.0,92.0 C119.2,104.0 120.8,114.2 120.0,125.0 C119.2,135.8 116.0,147.5 113.0,157.0 C110.0,166.5 105.0,174.4 102.0,182.0 C99.0,189.6 97.1,195.1 94.8,202.8 C92.5,210.5 89.1,222.0 87.9,228.2 C86.8,234.4 87.9,237.9 87.9,239.8"/>
<path d="M0.0,50.0 C4.7,47.8 18.8,41.2 28.0,37.0 C37.2,32.8 45.0,29.7 55.0,25.0 C65.0,20.3 79.2,12.8 88.0,9.0 C96.8,5.2 104.7,3.2 108.0,2.0"/>
<path d="M143.0,0.0 C146.2,1.2 155.0,5.2 162.0,6.9 C169.0,8.6 177.3,8.8 184.9,10.3 C192.5,11.8 200.5,12.0 207.7,16.0 C214.9,20.0 220.7,30.7 228.3,34.3 C235.9,37.9 246.2,36.2 253.5,37.7 C260.8,39.2 265.7,43.7 271.8,43.5 C277.9,43.3 282.4,37.2 290.0,36.6 C297.6,36.0 310.9,36.9 317.5,40.0 C324.1,43.1 317.5,50.6 329.5,55.5 C341.5,60.4 374.2,65.6 389.6,69.4 C405.0,73.2 413.2,75.9 422.0,78.6 C430.8,81.3 438.9,84.6 442.3,85.8"/>
<path d="M442.3,85.8 C445.4,84.1 453.7,78.8 460.6,75.5 C467.5,72.2 477.0,68.6 483.5,66.3 C490.0,64.0 495.7,63.7 499.5,61.8 C503.3,59.9 505.2,56.0 506.4,54.9"/>
<path d="M392.0,71.7 C390.1,77.1 385.4,92.0 380.4,104.0 C375.4,116.0 368.1,130.4 361.9,143.4 C355.7,156.4 350.0,170.0 343.4,182.0 C336.8,194.0 329.4,203.6 322.5,215.5 C315.6,227.4 307.1,244.2 301.7,253.7 C296.3,263.2 293.7,265.5 290.1,272.4 C286.5,279.2 282.6,290.4 279.9,294.8 C277.2,299.2 274.5,296.8 273.8,298.8 C273.1,300.8 273.9,303.9 275.9,307.0 C277.9,310.1 284.3,315.4 286.0,317.1"/>
<path d="M470.9,0.0 C474.5,3.4 487.8,14.9 492.6,20.6 C497.4,26.3 498.0,29.0 499.5,34.3 C501.0,39.6 499.9,46.9 501.8,52.6 C503.7,58.3 506.3,62.1 510.9,68.6 C515.5,75.1 523.1,82.3 529.2,91.5 C535.3,100.7 542.5,114.0 547.5,123.5 C552.5,133.0 555.6,138.9 559.0,148.7 C562.4,158.4 564.8,171.4 567.8,182.0 C570.8,192.6 573.9,202.0 577.0,212.0 C580.1,222.0 583.6,232.6 586.3,242.0 C589.0,251.4 585.5,258.7 593.2,268.7 C600.9,278.7 623.6,291.5 632.5,302.2 C641.4,312.9 644.1,327.9 646.4,333.0"/>
<path d="M506.4,52.6 C506.6,47.8 502.2,28.8 507.5,24.0 C512.8,19.2 528.7,21.8 538.4,24.0 C548.1,26.2 552.5,30.4 565.5,37.0 C578.5,43.6 605.6,58.2 616.4,63.6 C627.2,69.0 623.3,68.8 630.2,69.4 C637.1,70.0 650.3,68.9 658.0,67.0 C665.7,65.1 671.5,61.3 676.5,57.8 C681.5,54.3 686.1,48.1 688.0,46.2"/>
<path d="M473.0,69.4 L496.0,59.0"/>
<path d="M690.3,124.9 C688.8,128.8 681.8,141.1 681.0,148.0 C680.2,154.9 685.7,160.8 685.7,166.5 C685.7,172.2 682.4,178.2 681.0,182.0 C679.6,185.8 680.3,183.6 677.6,189.0 C674.9,194.4 669.0,206.7 664.9,214.4 C660.8,222.1 653.7,229.8 653.3,235.2 C652.9,240.6 659.9,240.1 662.6,246.7 C665.3,253.2 667.9,266.7 669.5,274.5 C671.1,282.3 671.5,286.4 672.2,293.3 C673.0,300.2 673.4,309.1 674.0,316.1 C674.6,323.1 675.7,332.0 676.0,335.2"/>
<path d="M0.0,166.0 C1.2,168.3 2.3,174.8 6.9,179.7 C11.5,184.6 20.8,190.7 27.4,195.7 C34.0,200.7 40.4,203.1 46.2,209.7 C52.0,216.3 55.4,230.2 62.4,235.2 C69.3,240.2 82.1,236.0 87.9,239.8 C93.7,243.7 94.3,249.4 97.0,258.3 C99.7,267.2 102.0,284.1 104.0,293.0 C106.0,301.9 105.2,306.9 108.7,311.5 C112.2,316.1 122.2,319.2 124.9,320.7"/>
<path d="M0.0,239.8 C2.0,241.2 9.1,243.2 12.2,248.0 C15.2,252.8 16.9,261.5 18.3,268.3 C19.7,275.1 21.0,280.9 20.3,288.7 C19.6,296.5 16.6,305.6 14.2,315.1 C11.8,324.6 7.8,336.5 6.1,345.6 C4.4,354.8 3.8,364.6 4.1,370.0 C4.4,375.4 7.4,376.7 8.1,378.0"/>
<path d="M6.1,378.1 C11.9,376.8 29.2,373.1 40.7,370.0 C52.2,366.9 67.8,361.2 75.2,359.8 C82.7,358.4 79.6,359.4 85.4,361.8 C91.2,364.2 97.4,369.2 109.8,374.0 C122.2,378.8 151.6,387.6 160.0,390.3"/>
<path d="M91.5,243.0 C92.8,246.6 97.9,256.7 99.6,264.3 C101.3,271.9 100.2,281.6 101.6,288.7 C102.9,295.8 104.0,301.9 107.7,307.0 C111.4,312.1 121.3,317.2 124.0,319.2"/>
<path d="M107.7,307.0 C105.3,310.7 96.9,321.5 93.5,329.3 C90.1,337.1 90.5,346.2 87.4,353.7 C84.4,361.1 79.6,367.2 75.2,374.0 C70.8,380.8 65.7,388.7 61.0,394.4 C56.3,400.1 49.2,405.7 46.8,408.0"/>
<path d="M75.2,359.8 C74.2,362.9 73.2,371.0 69.1,378.1 C65.0,385.2 53.8,398.4 50.8,402.5"/>
<path d="M109.8,374.0 L105.7,394.4"/>
<path d="M0.0,496.8 C1.3,496.6 7.1,494.8 8.1,495.8 C9.1,496.8 6.4,501.8 6.1,503.0"/>
<path d="M148.0,258.3 C151.1,256.0 161.1,248.5 166.5,244.4 C171.9,240.3 172.2,235.7 180.3,234.0 C188.4,232.3 205.6,236.5 215.0,234.0 C224.4,231.5 224.1,224.2 237.0,219.0 C249.9,213.8 279.8,204.7 292.5,202.8 C305.2,200.9 308.3,205.3 313.3,207.4 C318.3,209.5 318.3,212.4 322.5,215.5 C326.7,218.6 334.4,220.3 338.7,225.9 C342.9,231.5 345.7,240.9 348.0,249.0 C350.3,257.1 349.1,267.2 352.6,274.5 C356.1,281.8 365.5,286.1 368.8,293.0 C372.1,299.9 371.7,312.2 372.3,316.0"/>
<path d="M285.6,316.1 C291.0,315.9 305.6,314.0 317.9,315.0 C330.2,316.0 349.1,321.7 359.5,321.9 C369.9,322.1 369.1,317.7 380.3,316.1 C391.5,314.6 415.8,314.7 426.6,312.6 C437.4,310.5 437.3,305.7 445.0,303.4 C452.7,301.1 462.9,299.0 473.0,298.8 C483.1,298.6 495.1,300.3 505.4,302.2 C515.7,304.1 526.8,306.8 534.9,310.4 C543.0,314.0 546.6,320.1 553.9,323.8 C561.2,327.5 570.4,330.7 578.7,332.3 C587.0,333.9 592.4,332.8 603.5,333.3 C614.6,333.8 633.4,334.6 645.5,335.2 C657.6,335.8 665.4,337.3 676.0,337.1 C686.6,336.9 703.5,334.5 709.0,334.0"/>
<path d="M286.0,317.1 C285.3,319.1 284.7,325.9 282.0,329.3 C279.3,332.7 272.2,333.4 269.8,337.5 C267.4,341.6 267.7,349.6 267.7,353.7 C267.7,357.8 268.0,356.2 269.8,361.8 C271.6,367.4 277.3,377.0 278.6,387.0 C279.9,397.0 279.0,411.0 277.5,421.8 C276.0,432.6 270.4,444.2 269.4,451.9 C268.4,459.6 270.2,462.6 271.7,468.0 C273.2,473.4 277.6,476.9 278.6,484.2 C279.6,491.5 277.7,507.4 277.5,512.0"/>
<path d="M553.9,323.8 C554.5,325.7 555.2,332.0 557.8,335.2 C560.3,338.4 566.7,339.6 569.2,342.8 C571.7,346.0 573.0,350.8 573.0,354.3 C573.0,357.8 569.8,362.2 569.2,363.8"/>
<path d="M106.4,394.0 C113.7,395.2 141.8,401.0 150.3,401.0 C158.8,401.0 146.8,400.2 157.2,394.0 C167.6,387.8 203.4,369.0 212.7,364.0"/>
<path d="M150.3,401.0 C150.3,402.5 153.8,403.6 150.3,410.2 C146.8,416.8 136.8,431.1 129.5,440.3 C122.2,449.6 113.3,456.8 106.4,465.7 C99.5,474.6 92.9,484.2 87.9,493.5 C82.9,502.8 80.5,512.6 76.3,521.2 C72.0,529.8 64.7,541.0 62.4,545.0"/>
<path d="M41.6,479.6 C44.3,482.7 53.2,491.2 57.8,498.1 C62.4,505.0 67.5,517.4 69.4,521.2"/>
<path d="M85.5,505.0 C87.8,507.7 96.7,514.5 99.4,521.2 C102.1,527.9 101.3,541.0 101.7,545.0"/>
<path d="M219.7,387.0 C218.5,392.8 214.6,409.5 212.7,421.8 C210.8,434.1 207.2,453.7 208.0,461.0 C208.8,468.3 215.8,464.9 217.3,465.7"/>
<path d="M159.5,512.0 C160.7,509.7 162.2,501.9 166.5,498.0 C170.8,494.1 181.9,490.4 185.0,488.9"/>
<path d="M136.0,545.0 C138.3,543.8 146.0,538.0 150.0,538.0 C154.0,538.0 158.3,543.8 160.0,545.0"/>
<path d="M474.0,488.9 C471.5,491.2 463.1,495.8 459.0,502.7 C454.9,509.6 452.8,523.5 449.7,530.5 C446.6,537.5 442.0,542.6 440.5,545.0"/>
<path d="M606.0,375.6 C605.8,383.3 605.6,408.3 604.8,421.8 C604.0,435.3 602.4,444.6 601.3,456.5 C600.1,468.4 599.2,478.8 597.9,493.5 C596.5,508.2 594.0,536.4 593.2,545.0"/>
<path d="M565.5,387.0 C568.6,385.5 577.2,380.5 584.0,377.9 C590.8,375.3 602.3,372.5 606.0,371.4"/>
<path d="M565.5,387.0 C566.2,390.1 570.8,401.3 570.0,405.6 C569.2,409.9 567.8,411.8 560.9,412.6 C554.0,413.4 536.6,409.1 528.5,410.2 C520.4,411.3 516.5,415.2 512.3,419.5 C508.0,423.8 507.2,429.9 503.0,435.7 C498.8,441.5 491.5,446.1 486.9,454.2 C482.3,462.3 477.6,478.0 475.3,484.2 C473.0,490.4 473.4,490.0 473.0,491.2"/>
<path d="M643.0,461.0 C642.8,463.3 643.1,470.8 641.8,475.0 C640.4,479.2 635.7,474.8 634.9,486.5 C634.1,498.2 636.8,535.2 637.2,545.0"/>
<path d="M709.0,435.7 L690.3,438.0"/>
</g>
<g fill="none" stroke="#c9a9d3" stroke-linecap="round" stroke-linejoin="round">
<path d="M339.3,0.0 C339.5,2.3 343.3,4.9 340.4,13.7 C337.5,22.5 326.6,41.9 322.0,52.6 C317.4,63.3 316.0,68.6 313.0,77.8 C310.0,87.0 307.2,99.1 303.8,107.5 C300.4,115.9 296.2,121.5 292.4,128.0 C288.6,134.5 286.0,139.9 281.0,146.4 C276.0,152.9 268.3,161.6 262.6,167.0 C256.9,172.4 250.9,173.3 247.0,179.0 C243.1,184.7 241.4,191.8 239.0,201.4 C236.6,211.0 233.8,229.3 232.5,236.4 C231.2,243.5 231.2,242.7 231.0,244.0" stroke-width="5.3"/>
<path d="M697.3,0.0 C696.9,4.6 696.9,20.0 695.0,27.7 C693.1,35.4 686.5,40.8 685.7,46.2 C684.9,51.6 686.4,55.9 690.3,60.1 C694.2,64.3 705.9,69.8 709.0,71.7" stroke-width="5.3"/>
<path d="M120.0,364.0 C121.6,362.6 125.2,359.2 129.5,355.4 C133.8,351.6 140.9,343.8 146.0,341.0 C151.1,338.2 146.3,336.3 160.0,338.8 C173.7,341.3 216.7,353.0 228.0,355.9" stroke-width="4.5"/>
<path d="M0.0,391.7 C2.3,392.1 8.9,392.6 13.9,394.0 C18.9,395.4 25.4,397.5 30.0,399.8 C34.6,402.1 35.0,407.5 41.6,407.9 C48.2,408.3 59.2,404.3 69.4,402.2 C79.6,400.1 97.1,397.7 102.9,395.2 C108.7,392.7 101.1,392.3 104.0,387.1 C106.9,381.9 117.5,367.9 120.2,364.0" stroke-width="5.3"/>
<path d="M102.9,395.2 C102.3,402.7 101.1,430.5 99.4,440.3 C97.7,450.1 96.3,450.0 92.5,454.2 C88.7,458.4 84.0,461.8 76.3,465.7 C68.6,469.6 56.6,472.3 46.2,477.3 C35.8,482.3 21.6,491.2 13.9,495.8 C6.2,500.4 2.3,503.5 0.0,505.0" stroke-width="5.3"/>
<path d="M136.4,438.0 C142.2,440.3 163.3,448.1 171.0,451.9 C178.7,455.7 179.2,456.0 182.7,461.0 C186.2,466.0 187.8,476.1 192.0,481.9 C196.2,487.7 202.2,492.3 208.0,495.8 C213.8,499.3 221.8,501.4 226.6,502.7 C231.4,504.0 229.5,503.9 237.0,503.9 C244.5,503.9 262.1,502.1 271.7,502.7 C281.3,503.3 289.4,504.3 294.8,507.4 C300.2,510.5 302.1,514.9 304.0,521.2 C305.9,527.5 306.0,541.0 306.4,545.0" stroke-width="4.8"/>
<path d="M190.4,483.3 L228.0,475.5" stroke-width="4.3"/>
<path d="M271.7,502.7 L315.0,500.0" stroke-width="4.3"/>
<path d="M473.0,529.3 C480.7,525.2 503.8,513.7 519.2,505.0 C534.6,496.3 551.5,485.4 565.5,477.3 C579.5,469.2 596.8,460.0 603.0,456.5" stroke-width="4.8"/>
<path d="M603.0,456.5 L602.8,431.5 L634.9,444.9 L683.4,438.0 L712.0,415.0" stroke-width="4.8"/>
<path d="M474.0,528.2 L438.2,545.0" stroke-width="4.8"/>
</g><g fill="none" stroke="#e2c9ea" stroke-linecap="round" stroke-linejoin="round">
<path d="M339.3,0.0 C339.5,2.3 343.3,4.9 340.4,13.7 C337.5,22.5 326.6,41.9 322.0,52.6 C317.4,63.3 316.0,68.6 313.0,77.8 C310.0,87.0 307.2,99.1 303.8,107.5 C300.4,115.9 296.2,121.5 292.4,128.0 C288.6,134.5 286.0,139.9 281.0,146.4 C276.0,152.9 268.3,161.6 262.6,167.0 C256.9,172.4 250.9,173.3 247.0,179.0 C243.1,184.7 241.4,191.8 239.0,201.4 C236.6,211.0 233.8,229.3 232.5,236.4 C231.2,243.5 231.2,242.7 231.0,244.0" stroke-width="4.0"/>
<path d="M697.3,0.0 C696.9,4.6 696.9,20.0 695.0,27.7 C693.1,35.4 686.5,40.8 685.7,46.2 C684.9,51.6 686.4,55.9 690.3,60.1 C694.2,64.3 705.9,69.8 709.0,71.7" stroke-width="4.0"/>
<path d="M120.0,364.0 C121.6,362.6 125.2,359.2 129.5,355.4 C133.8,351.6 140.9,343.8 146.0,341.0 C151.1,338.2 146.3,336.3 160.0,338.8 C173.7,341.3 216.7,353.0 228.0,355.9" stroke-width="3.2"/>
<path d="M0.0,391.7 C2.3,392.1 8.9,392.6 13.9,394.0 C18.9,395.4 25.4,397.5 30.0,399.8 C34.6,402.1 35.0,407.5 41.6,407.9 C48.2,408.3 59.2,404.3 69.4,402.2 C79.6,400.1 97.1,397.7 102.9,395.2 C108.7,392.7 101.1,392.3 104.0,387.1 C106.9,381.9 117.5,367.9 120.2,364.0" stroke-width="4.0"/>
<path d="M102.9,395.2 C102.3,402.7 101.1,430.5 99.4,440.3 C97.7,450.1 96.3,450.0 92.5,454.2 C88.7,458.4 84.0,461.8 76.3,465.7 C68.6,469.6 56.6,472.3 46.2,477.3 C35.8,482.3 21.6,491.2 13.9,495.8 C6.2,500.4 2.3,503.5 0.0,505.0" stroke-width="4.0"/>
<path d="M136.4,438.0 C142.2,440.3 163.3,448.1 171.0,451.9 C178.7,455.7 179.2,456.0 182.7,461.0 C186.2,466.0 187.8,476.1 192.0,481.9 C196.2,487.7 202.2,492.3 208.0,495.8 C213.8,499.3 221.8,501.4 226.6,502.7 C231.4,504.0 229.5,503.9 237.0,503.9 C244.5,503.9 262.1,502.1 271.7,502.7 C281.3,503.3 289.4,504.3 294.8,507.4 C300.2,510.5 302.1,514.9 304.0,521.2 C305.9,527.5 306.0,541.0 306.4,545.0" stroke-width="3.5"/>
<path d="M190.4,483.3 L228.0,475.5" stroke-width="3.0"/>
<path d="M271.7,502.7 L315.0,500.0" stroke-width="3.0"/>
<path d="M473.0,529.3 C480.7,525.2 503.8,513.7 519.2,505.0 C534.6,496.3 551.5,485.4 565.5,477.3 C579.5,469.2 596.8,460.0 603.0,456.5" stroke-width="3.5"/>
<path d="M603.0,456.5 L602.8,431.5 L634.9,444.9 L683.4,438.0 L712.0,415.0" stroke-width="3.5"/>
<path d="M474.0,528.2 L438.2,545.0" stroke-width="3.5"/>
</g>
<path d="M229.6,368.0 C228.8,370.0 227.9,375.5 225.0,380.1 C222.1,384.7 215.6,391.2 212.0,395.5 C208.4,399.8 208.4,400.1 203.5,405.6 C198.6,411.1 188.1,420.2 182.7,428.7 C177.3,437.2 174.9,446.5 171.0,456.5 C167.1,466.5 163.3,478.1 159.5,488.9 C155.7,499.7 151.8,511.4 148.0,521.2 C144.2,531.1 138.3,543.5 136.4,548.0" fill="none" stroke="#bb86af" stroke-width="7.6" stroke-linecap="butt"/>
<path d="M233.0,231.0 C232.8,232.2 232.3,235.2 231.6,238.0 C230.9,240.8 229.6,242.7 228.6,248.0 C227.6,253.3 226.3,263.0 225.5,270.0 C224.7,277.0 224.3,283.3 223.7,290.0 C223.0,296.7 221.8,303.5 221.6,310.0 C221.4,316.5 221.5,322.4 222.6,329.0 C223.7,335.6 226.8,343.5 228.1,349.6 C229.3,355.8 230.4,361.3 230.1,365.9 C229.8,370.5 227.1,375.1 226.5,377.0" fill="none" stroke="#bb86af" stroke-width="9.2" stroke-linecap="round"/>
<path d="M229.6,368.0 C228.8,370.0 227.9,375.5 225.0,380.1 C222.1,384.7 215.6,391.2 212.0,395.5 C208.4,399.8 208.4,400.1 203.5,405.6 C198.6,411.1 188.1,420.2 182.7,428.7 C177.3,437.2 174.9,446.5 171.0,456.5 C167.1,466.5 163.3,478.1 159.5,488.9 C155.7,499.7 151.8,511.4 148.0,521.2 C144.2,531.1 138.3,543.5 136.4,548.0" fill="none" stroke="#d9a9d1" stroke-width="6.2"/>
<path d="M233.0,231.0 C232.8,232.2 232.3,235.2 231.6,238.0 C230.9,240.8 229.6,242.7 228.6,248.0 C227.6,253.3 226.3,263.0 225.5,270.0 C224.7,277.0 224.3,283.3 223.7,290.0 C223.0,296.7 221.8,303.5 221.6,310.0 C221.4,316.5 221.5,322.4 222.6,329.0 C223.7,335.6 226.8,343.5 228.1,349.6 C229.3,355.8 230.4,361.3 230.1,365.9 C229.8,370.5 227.1,375.1 226.5,377.0" fill="none" stroke="#d9a9d1" stroke-width="7.7" stroke-linecap="round"/>
<path d="M283.2,456.0 C283.1,457.3 281.8,460.3 282.5,464.0 C283.2,467.7 284.6,474.1 287.3,478.0 C290.0,481.9 293.6,483.5 298.5,487.2 C303.4,490.9 310.9,494.9 316.5,500.0 C322.1,505.1 326.9,511.6 332.0,518.0 C337.1,524.5 342.4,533.9 347.4,538.7 C352.4,543.5 359.6,545.6 362.0,547.0" fill="none" stroke="#cf8f86" stroke-width="6.6"/>
<path d="M283.2,456.0 C283.1,457.3 281.8,460.3 282.5,464.0 C283.2,467.7 284.6,474.1 287.3,478.0 C290.0,481.9 293.6,483.5 298.5,487.2 C303.4,490.9 310.9,494.9 316.5,500.0 C322.1,505.1 326.9,511.6 332.0,518.0 C337.1,524.5 342.4,533.9 347.4,538.7 C352.4,543.5 359.6,545.6 362.0,547.0" fill="none" stroke="#eab0a6" stroke-width="5.2"/>
<path d="M-5.0,517.6 C11.2,514.4 64.7,504.1 92.5,498.1 C120.3,492.2 137.7,487.0 161.8,481.9 C185.9,476.8 216.8,471.5 237.0,467.2 C257.2,462.9 271.0,458.8 283.2,456.0 C295.4,453.2 299.2,452.7 310.0,450.2 C320.8,447.7 329.3,446.0 348.0,440.9 C366.7,435.8 401.0,425.7 422.0,419.8 C443.0,413.9 459.0,409.9 474.0,405.6 C489.0,401.4 502.5,397.1 512.0,394.3 C521.5,391.5 524.8,390.5 531.1,388.6 C537.5,386.7 543.8,385.1 550.1,382.9 C556.5,380.7 562.8,378.2 569.2,375.2 C575.6,372.2 581.9,368.0 588.3,364.7 C594.6,361.4 600.9,358.4 607.3,355.2 C613.6,352.0 620.0,349.0 626.4,345.7 C632.8,342.4 639.1,338.5 645.5,335.2 C651.9,331.9 658.1,328.7 664.5,325.7 C670.9,322.7 675.7,320.6 683.6,317.1 C691.5,313.7 707.3,307.0 712.0,305.0" fill="none" stroke="#cb8b81" stroke-width="8.3"/>
<path d="M-5.0,517.6 C11.2,514.4 64.7,504.1 92.5,498.1 C120.3,492.2 137.7,487.0 161.8,481.9 C185.9,476.8 216.8,471.5 237.0,467.2 C257.2,462.9 271.0,458.8 283.2,456.0 C295.4,453.2 299.2,452.7 310.0,450.2 C320.8,447.7 329.3,446.0 348.0,440.9 C366.7,435.8 401.0,425.7 422.0,419.8 C443.0,413.9 459.0,409.9 474.0,405.6 C489.0,401.4 502.5,397.1 512.0,394.3 C521.5,391.5 524.8,390.5 531.1,388.6 C537.5,386.7 543.8,385.1 550.1,382.9 C556.5,380.7 562.8,378.2 569.2,375.2 C575.6,372.2 581.9,368.0 588.3,364.7 C594.6,361.4 600.9,358.4 607.3,355.2 C613.6,352.0 620.0,349.0 626.4,345.7 C632.8,342.4 639.1,338.5 645.5,335.2 C651.9,331.9 658.1,328.7 664.5,325.7 C670.9,322.7 675.7,320.6 683.6,317.1 C691.5,313.7 707.3,307.0 712.0,305.0" fill="none" stroke="#ecaea4" stroke-width="6.9"/>
<path d="M99.2,492.2 L104.6,490.8 L110.1,489.4 L115.5,488.0 L121.0,486.6 L126.5,485.3 L131.9,483.9 L137.4,482.6 L142.9,481.3 L148.4,480.0 L153.9,478.8 L159.4,477.6 L164.9,476.4 L170.4,475.3 L175.9,474.1 L181.4,473.0 L186.9,472.0 L192.5,470.9 L198.0,469.9 L203.5,468.9 L209.1,467.9 L214.6,466.9 L220.2,465.9 L221.8,473.5 L216.4,474.9 L210.9,476.3 L205.5,477.7 L200.0,479.1 L194.5,480.5 L189.1,481.8 L183.6,483.1 L178.1,484.4 L172.6,485.7 L167.1,486.9 L161.6,488.1 L156.1,489.3 L150.6,490.5 L145.1,491.6 L139.6,492.7 L134.1,493.8 L128.5,494.8 L123.0,495.8 L117.5,496.9 L111.9,497.9 L106.4,498.9 L100.8,499.8Z" fill="#ecaea4" stroke="#cb8b81" stroke-width="0.7"/>
<path d="M-5.0,517.6 C11.2,514.4 64.7,504.1 92.5,498.1 C120.3,492.2 137.7,487.0 161.8,481.9 C185.9,476.8 216.8,471.5 237.0,467.2 C257.2,462.9 271.0,458.8 283.2,456.0 C295.4,453.2 299.2,452.7 310.0,450.2 C320.8,447.7 329.3,446.0 348.0,440.9 C366.7,435.8 401.0,425.7 422.0,419.8 C443.0,413.9 459.0,409.9 474.0,405.6 C489.0,401.4 502.5,397.1 512.0,394.3 C521.5,391.5 524.8,390.5 531.1,388.6 C537.5,386.7 543.8,385.1 550.1,382.9 C556.5,380.7 562.8,378.2 569.2,375.2 C575.6,372.2 581.9,368.0 588.3,364.7 C594.6,361.4 600.9,358.4 607.3,355.2 C613.6,352.0 620.0,349.0 626.4,345.7 C632.8,342.4 639.1,338.5 645.5,335.2 C651.9,331.9 658.1,328.7 664.5,325.7 C670.9,322.7 675.7,320.6 683.6,317.1 C691.5,313.7 707.3,307.0 712.0,305.0" fill="none" stroke="#ecaea4" stroke-width="6.6"/>
<path d="M170.2,458.5 C169.0,461.9 164.8,473.9 163.0,479.0 C161.2,484.1 162.0,481.9 159.5,488.9 C157.0,495.9 151.8,511.4 148.0,521.2 C144.2,531.1 138.3,543.5 136.4,548.0" fill="none" stroke="#cb8b81" stroke-width="7.8"/>
<path d="M170.2,458.5 C169.0,461.9 164.8,473.9 163.0,479.0 C161.2,484.1 162.0,481.9 159.5,488.9 C157.0,495.9 151.8,511.4 148.0,521.2 C144.2,531.1 138.3,543.5 136.4,548.0" fill="none" stroke="#ecaea4" stroke-width="6.4"/>
<g><rect x="280.4" y="107.7" width="41.3" height="14.6" rx="3.2" fill="#4a88d2"/><rect x="282.5" y="109.6" width="37.1" height="10.8" rx="1.8" fill="none" stroke="#c6dff8" stroke-width="1"/><text x="301.1" y="118.9" font-size="10.5" fill="#c9e1f9" text-anchor="middle" textLength="27.5" lengthAdjust="spacingAndGlyphs">SS342</text></g>
<g><rect x="690.3" y="404.6" width="40" height="13.4" rx="3.2" fill="#4a88d2"/><rect x="692.3" y="406.5" width="36" height="9.6" rx="1.8" fill="none" stroke="#c6dff8" stroke-width="1"/><text x="696.2" y="415.1" font-size="10" fill="#c9e1f9" textLength="11.5" lengthAdjust="spacingAndGlyphs">SP</text></g>
<g><path d="M95.3,495.8 L100.2,486.8 H117.6 L122.5,495.8 L117.6,504.9 H100.2 Z" fill="#e8f3e6"/><path d="M96.9,495.8 L101,488.2 H116.8 L120.9,495.8 L116.8,503.5 H101 Z" fill="#4a9a52"/><text x="108.9" y="499.7" font-size="10.5" font-weight="400" fill="#eef7ee" text-anchor="middle" textLength="13" lengthAdjust="spacingAndGlyphs">A4</text></g>
<g fill="#fbfaf7" stroke="#fbfaf7" stroke-width="2.6" stroke-linejoin="round" opacity="0.75">
<text x="20.4" y="21.1" font-size="14" textLength="61.0" lengthAdjust="spacingAndGlyphs">Besana in</text>
<text x="27.6" y="35.1" font-size="14" textLength="46.8" lengthAdjust="spacingAndGlyphs">Brianza</text>
<text x="86.6" y="19.1" font-size="14" textLength="98.8" lengthAdjust="spacingAndGlyphs">La Misericordia</text>
<text x="107.6" y="56.1" font-size="14" textLength="56.8" lengthAdjust="spacingAndGlyphs">Galgiana</text>
<text x="0.0" y="74.1" font-size="14" textLength="44.4" lengthAdjust="spacingAndGlyphs">asaglia</text>
<text x="0.2" y="94.1" font-size="14">o</text>
<text x="24.6" y="102.6" font-size="14" textLength="53.3" lengthAdjust="spacingAndGlyphs">Tregasio</text>
<text x="-3.6" y="122.1" font-size="14" textLength="44.0" lengthAdjust="spacingAndGlyphs">Pobiga</text>
<text x="46.6" y="140.1" font-size="14" textLength="72.8" lengthAdjust="spacingAndGlyphs">Correzzana</text>
<text x="-0.2" y="159.6" font-size="14" textLength="25.6" lengthAdjust="spacingAndGlyphs">ggio</text>
<text x="223.4" y="9.2" font-size="14" textLength="88.8" lengthAdjust="spacingAndGlyphs">Montevecchia</text>
<text x="173.5" y="76.7" font-size="14" textLength="82.7" lengthAdjust="spacingAndGlyphs">Maressoletto</text>
<text x="182.6" y="91.6" font-size="14" textLength="64.8" lengthAdjust="spacingAndGlyphs">Borromeo</text>
<text x="224.5" y="131.4" font-size="14" textLength="59.6" lengthAdjust="spacingAndGlyphs">Lomagna</text>
<text x="289.3" y="39.1" font-size="14" textLength="60.9" lengthAdjust="spacingAndGlyphs">Cernusco</text>
<text x="278.2" y="54.1" font-size="14" textLength="82.9" lengthAdjust="spacingAndGlyphs">Lombardone</text>
<text x="397.3" y="9.2" font-size="14" textLength="68.3" lengthAdjust="spacingAndGlyphs">Imbersago</text>
<text x="400.6" y="28.1" font-size="14" textLength="34.5" lengthAdjust="spacingAndGlyphs">Selva</text>
<text x="362.6" y="46.7" font-size="14" textLength="45.2" lengthAdjust="spacingAndGlyphs">Merate</text>
<text x="314.1" y="84.1" font-size="14" textLength="63.9" lengthAdjust="spacingAndGlyphs">Brugarolo</text>
<text x="391.0" y="76.8" font-size="14" textLength="53.8" lengthAdjust="spacingAndGlyphs">Paderno</text>
<text x="395.6" y="91.1" font-size="14" textLength="45.3" lengthAdjust="spacingAndGlyphs">d&#39;Adda</text>
<text x="268.6" y="102.9" font-size="14" textLength="50.5" lengthAdjust="spacingAndGlyphs">Osnago</text>
<text x="344.8" y="112.1" font-size="14" textLength="67.6" lengthAdjust="spacingAndGlyphs">Sernovella</text>
<text x="299.6" y="132.7" font-size="14" textLength="40.8" lengthAdjust="spacingAndGlyphs">Ronco</text>
<text x="290.6" y="147.8" font-size="14" textLength="58.2" lengthAdjust="spacingAndGlyphs">Briantino</text>
<text x="390.4" y="139.9" font-size="14" textLength="55.0" lengthAdjust="spacingAndGlyphs">Verderio</text>
<text x="478.6" y="18.6" font-size="14" textLength="49.0" lengthAdjust="spacingAndGlyphs">Carvico</text>
<text x="477.6" y="49.1" font-size="14" textLength="50.8" lengthAdjust="spacingAndGlyphs">Calusco</text>
<text x="480.6" y="63.4" font-size="14" textLength="44.8" lengthAdjust="spacingAndGlyphs">d&#39;Adda</text>
<text x="589.4" y="11.6" font-size="14" textLength="36.6" lengthAdjust="spacingAndGlyphs">Ca&#39; di</text>
<text x="594.6" y="25.9" font-size="14" textLength="26.8" lengthAdjust="spacingAndGlyphs">Pale</text>
<text x="616.4" y="67.5" font-size="14" textLength="36.9" lengthAdjust="spacingAndGlyphs">Terno</text>
<text x="613.2" y="82.1" font-size="14" textLength="41.7" lengthAdjust="spacingAndGlyphs">d&#39;Isola</text>
<text x="518.8" y="102.7" font-size="14" textLength="33.9" lengthAdjust="spacingAndGlyphs">Solza</text>
<text x="510.3" y="121.4" font-size="14" textLength="64.8" lengthAdjust="spacingAndGlyphs">Medolago</text>
<text x="585.2" y="123.7" font-size="14" textLength="58.6" lengthAdjust="spacingAndGlyphs">Chignolo</text>
<text x="594.0" y="138.1" font-size="14" textLength="41.2" lengthAdjust="spacingAndGlyphs">d&#39;Isola</text>
<text x="671.0" y="86.1" font-size="14" textLength="45.9" lengthAdjust="spacingAndGlyphs">Bonate</text>
<text x="673.6" y="100.6" font-size="14" textLength="38.3" lengthAdjust="spacingAndGlyphs">Sopra</text>
<text x="677.9" y="123.7" font-size="14" textLength="46.0" lengthAdjust="spacingAndGlyphs">Bonate</text>
<text x="682.6" y="138.5" font-size="14" textLength="34.8" lengthAdjust="spacingAndGlyphs">Sotto</text>
<text x="479.1" y="151.9" font-size="14" textLength="35.9" lengthAdjust="spacingAndGlyphs">Porto</text>
<text x="474.9" y="166.1" font-size="14" textLength="44.3" lengthAdjust="spacingAndGlyphs">d&#39;Adda</text>
<text x="549.4" y="177.8" font-size="14" textLength="38.5" lengthAdjust="spacingAndGlyphs">Suisio</text>
<text x="654.1" y="188.1" font-size="14" textLength="51.5" lengthAdjust="spacingAndGlyphs">Madone</text>
<text x="698.0" y="9.7" font-size="14" textLength="42.4" lengthAdjust="spacingAndGlyphs">Locate</text>
<text x="75.9" y="196.8" font-size="14" textLength="42.5" lengthAdjust="spacingAndGlyphs">Lesmo</text>
<text x="-0.2" y="206.8" font-size="14" textLength="13.3" lengthAdjust="spacingAndGlyphs">co</text>
<text x="183.4" y="189.4" font-size="14" textLength="49.4" lengthAdjust="spacingAndGlyphs">Usmate</text>
<text x="188.0" y="203.7" font-size="14" textLength="40.1" lengthAdjust="spacingAndGlyphs">Velate</text>
<text x="215.8" y="226.4" font-size="14" textLength="49.8" lengthAdjust="spacingAndGlyphs">Cascina</text>
<text x="214.6" y="241.7" font-size="14" textLength="52.4" lengthAdjust="spacingAndGlyphs">Corrada</text>
<text x="131.9" y="243.7" font-size="14" textLength="48.4" lengthAdjust="spacingAndGlyphs">Bernate</text>
<text x="1.4" y="262.1" font-size="14" textLength="45.2" lengthAdjust="spacingAndGlyphs">assono</text>
<text x="108.3" y="280.7" font-size="14" textLength="42.1" lengthAdjust="spacingAndGlyphs">Arcore</text>
<text x="-0.2" y="329.3" font-size="14" textLength="37.1" lengthAdjust="spacingAndGlyphs">ano al</text>
<text x="-0.2" y="344.3" font-size="14" textLength="30.2" lengthAdjust="spacingAndGlyphs">mbro</text>
<text x="59.2" y="346.6" font-size="14" textLength="61.4" lengthAdjust="spacingAndGlyphs">Villasanta</text>
<text x="215.8" y="318.3" font-size="14" textLength="64.4" lengthAdjust="spacingAndGlyphs">Vimercate</text>
<text x="293.2" y="206.1" font-size="14" textLength="78.8" lengthAdjust="spacingAndGlyphs">Bernareggio</text>
<text x="359.1" y="233.8" font-size="14" textLength="52.2" lengthAdjust="spacingAndGlyphs">Sulbiate</text>
<text x="444.6" y="208.4" font-size="14" textLength="51.8" lengthAdjust="spacingAndGlyphs">Cornate</text>
<text x="447.5" y="221.8" font-size="14" textLength="46.2" lengthAdjust="spacingAndGlyphs">d&#39;Adda</text>
<text x="256.3" y="271.5" font-size="14" textLength="61.6" lengthAdjust="spacingAndGlyphs">Ruginello</text>
<text x="389.2" y="271.5" font-size="14" textLength="57.4" lengthAdjust="spacingAndGlyphs">Mezzago</text>
<text x="456.3" y="271.5" font-size="14" textLength="54.1" lengthAdjust="spacingAndGlyphs">Colnago</text>
<text x="292.1" y="290.0" font-size="14" textLength="81.3" lengthAdjust="spacingAndGlyphs">San Nazzaro</text>
<text x="345.6" y="308.5" font-size="14" textLength="52.8" lengthAdjust="spacingAndGlyphs">Bellusco</text>
<text x="442.8" y="318.5" font-size="14" textLength="55.6" lengthAdjust="spacingAndGlyphs">Busnago</text>
<text x="301.3" y="329.8" font-size="14" textLength="49.4" lengthAdjust="spacingAndGlyphs">Cascina</text>
<text x="300.9" y="344.3" font-size="14" textLength="50.9" lengthAdjust="spacingAndGlyphs">Rossino</text>
<text x="429.6" y="355.6" font-size="14" textLength="55.4" lengthAdjust="spacingAndGlyphs">Roncello</text>
<text x="237.6" y="365.1" font-size="14" textLength="61.1" lengthAdjust="spacingAndGlyphs">Burago di</text>
<text x="244.6" y="381.8" font-size="14" textLength="49.4" lengthAdjust="spacingAndGlyphs">Molgora</text>
<text x="529.9" y="233.8" font-size="14" textLength="64.9" lengthAdjust="spacingAndGlyphs">Bottanuco</text>
<text x="666.8" y="224.6" font-size="14" textLength="39.6" lengthAdjust="spacingAndGlyphs">Filago</text>
<text x="666.0" y="290.2" font-size="14" textLength="41.8" lengthAdjust="spacingAndGlyphs">Marne</text>
<text x="624.1" y="318.3" font-size="14" textLength="60.0" lengthAdjust="spacingAndGlyphs">Grignano</text>
<text x="581.6" y="339.2" font-size="14" textLength="41.0" lengthAdjust="spacingAndGlyphs">Trezzo</text>
<text x="571.6" y="353.8" font-size="14" textLength="59.0" lengthAdjust="spacingAndGlyphs">sull&#39;Adda</text>
<text x="655.6" y="355.7" font-size="14" textLength="61.2" lengthAdjust="spacingAndGlyphs">Brembate</text>
<text x="118.0" y="393.4" font-size="14" textLength="75.4" lengthAdjust="spacingAndGlyphs">Concorezzo</text>
<text x="83.3" y="423.9" font-size="14" textLength="80.1" lengthAdjust="spacingAndGlyphs">Malcantone-</text>
<text x="92.1" y="438.0" font-size="14" textLength="61.3" lengthAdjust="spacingAndGlyphs">Brambilla</text>
<text x="186.4" y="442.6" font-size="14" textLength="43.4" lengthAdjust="spacingAndGlyphs">Agrate</text>
<text x="184.6" y="457.0" font-size="14" textLength="47.0" lengthAdjust="spacingAndGlyphs">Brianza</text>
<text x="40.1" y="477.8" font-size="14" textLength="87.0" lengthAdjust="spacingAndGlyphs">San Damiano</text>
<text x="146.4" y="534.4" font-size="14" textLength="58.0" lengthAdjust="spacingAndGlyphs">Carugate</text>
<text x="227.3" y="487.3" font-size="14" textLength="65.6" lengthAdjust="spacingAndGlyphs">Caponago</text>
<text x="340.6" y="374.9" font-size="14" textLength="49.4" lengthAdjust="spacingAndGlyphs">Ornago</text>
<text x="318.6" y="414.1" font-size="14" textLength="79.5" lengthAdjust="spacingAndGlyphs">Cavenago di</text>
<text x="338.3" y="429.1" font-size="14" textLength="44.8" lengthAdjust="spacingAndGlyphs">Brianza</text>
<text x="426.2" y="404.9" font-size="14" textLength="49.5" lengthAdjust="spacingAndGlyphs">Cascina</text>
<text x="421.6" y="418.8" font-size="14" textLength="56.8" lengthAdjust="spacingAndGlyphs">Cattaneo</text>
<text x="238.9" y="439.6" font-size="14" textLength="43.5" lengthAdjust="spacingAndGlyphs">Omate</text>
<text x="332.1" y="468.5" font-size="14" textLength="66.5" lengthAdjust="spacingAndGlyphs">Cambiago</text>
<text x="445.4" y="468.5" font-size="14" textLength="50.4" lengthAdjust="spacingAndGlyphs">Basiano</text>
<text x="373.0" y="515.1" font-size="14" textLength="50.4" lengthAdjust="spacingAndGlyphs">Gessate</text>
<text x="240.1" y="545.3" font-size="14" textLength="80.1" lengthAdjust="spacingAndGlyphs">Pessano con</text>
<text x="513.3" y="403.2" font-size="14" textLength="59.3" lengthAdjust="spacingAndGlyphs">Grezzago</text>
<text x="500.8" y="423.9" font-size="14" textLength="57.6" lengthAdjust="spacingAndGlyphs">Trezzano</text>
<text x="514.2" y="438.1" font-size="14" textLength="30.4" lengthAdjust="spacingAndGlyphs">Rosa</text>
<text x="606.6" y="442.6" font-size="14" textLength="43.0" lengthAdjust="spacingAndGlyphs">Vaprio</text>
<text x="605.6" y="457.4" font-size="14" textLength="44.8" lengthAdjust="spacingAndGlyphs">d&#39;Adda</text>
<text x="632.8" y="486.6" font-size="14" textLength="41.6" lengthAdjust="spacingAndGlyphs">Airoldi</text>
<text x="507.3" y="505.5" font-size="14" textLength="44.1" lengthAdjust="spacingAndGlyphs">Bettola</text>
<text x="603.2" y="507.8" font-size="14" textLength="62.2" lengthAdjust="spacingAndGlyphs">Fara Gera</text>
<text x="612.0" y="521.7" font-size="14" textLength="45.2" lengthAdjust="spacingAndGlyphs">d&#39;Adda</text>
<text x="-0.2" y="422.8" font-size="18.5" textLength="35.6" lengthAdjust="spacingAndGlyphs">onza</text>
<text x="30.8" y="534.9" font-size="18.5" textLength="79.4" lengthAdjust="spacingAndGlyphs">Brugherio</text>
</g>
<g fill="#565656" opacity="0.96">
<text x="20.4" y="21.1" font-size="14" textLength="61.0" lengthAdjust="spacingAndGlyphs">Besana in</text>
<text x="27.6" y="35.1" font-size="14" textLength="46.8" lengthAdjust="spacingAndGlyphs">Brianza</text>
<text x="86.6" y="19.1" font-size="14" textLength="98.8" lengthAdjust="spacingAndGlyphs">La Misericordia</text>
<text x="107.6" y="56.1" font-size="14" textLength="56.8" lengthAdjust="spacingAndGlyphs">Galgiana</text>
<text x="0.0" y="74.1" font-size="14" textLength="44.4" lengthAdjust="spacingAndGlyphs">asaglia</text>
<text x="0.2" y="94.1" font-size="14">o</text>
<text x="24.6" y="102.6" font-size="14" textLength="53.3" lengthAdjust="spacingAndGlyphs">Tregasio</text>
<text x="-3.6" y="122.1" font-size="14" textLength="44.0" lengthAdjust="spacingAndGlyphs">Pobiga</text>
<text x="46.6" y="140.1" font-size="14" textLength="72.8" lengthAdjust="spacingAndGlyphs">Correzzana</text>
<text x="-0.2" y="159.6" font-size="14" textLength="25.6" lengthAdjust="spacingAndGlyphs">ggio</text>
<text x="223.4" y="9.2" font-size="14" textLength="88.8" lengthAdjust="spacingAndGlyphs">Montevecchia</text>
<text x="173.5" y="76.7" font-size="14" textLength="82.7" lengthAdjust="spacingAndGlyphs">Maressoletto</text>
<text x="182.6" y="91.6" font-size="14" textLength="64.8" lengthAdjust="spacingAndGlyphs">Borromeo</text>
<text x="224.5" y="131.4" font-size="14" textLength="59.6" lengthAdjust="spacingAndGlyphs">Lomagna</text>
<text x="289.3" y="39.1" font-size="14" textLength="60.9" lengthAdjust="spacingAndGlyphs">Cernusco</text>
<text x="278.2" y="54.1" font-size="14" textLength="82.9" lengthAdjust="spacingAndGlyphs">Lombardone</text>
<text x="397.3" y="9.2" font-size="14" textLength="68.3" lengthAdjust="spacingAndGlyphs">Imbersago</text>
<text x="400.6" y="28.1" font-size="14" textLength="34.5" lengthAdjust="spacingAndGlyphs">Selva</text>
<text x="362.6" y="46.7" font-size="14" textLength="45.2" lengthAdjust="spacingAndGlyphs">Merate</text>
<text x="314.1" y="84.1" font-size="14" textLength="63.9" lengthAdjust="spacingAndGlyphs">Brugarolo</text>
<text x="391.0" y="76.8" font-size="14" textLength="53.8" lengthAdjust="spacingAndGlyphs">Paderno</text>
<text x="395.6" y="91.1" font-size="14" textLength="45.3" lengthAdjust="spacingAndGlyphs">d&#39;Adda</text>
<text x="268.6" y="102.9" font-size="14" textLength="50.5" lengthAdjust="spacingAndGlyphs">Osnago</text>
<text x="344.8" y="112.1" font-size="14" textLength="67.6" lengthAdjust="spacingAndGlyphs">Sernovella</text>
<text x="299.6" y="132.7" font-size="14" textLength="40.8" lengthAdjust="spacingAndGlyphs">Ronco</text>
<text x="290.6" y="147.8" font-size="14" textLength="58.2" lengthAdjust="spacingAndGlyphs">Briantino</text>
<text x="390.4" y="139.9" font-size="14" textLength="55.0" lengthAdjust="spacingAndGlyphs">Verderio</text>
<text x="478.6" y="18.6" font-size="14" textLength="49.0" lengthAdjust="spacingAndGlyphs">Carvico</text>
<text x="477.6" y="49.1" font-size="14" textLength="50.8" lengthAdjust="spacingAndGlyphs">Calusco</text>
<text x="480.6" y="63.4" font-size="14" textLength="44.8" lengthAdjust="spacingAndGlyphs">d&#39;Adda</text>
<text x="589.4" y="11.6" font-size="14" textLength="36.6" lengthAdjust="spacingAndGlyphs">Ca&#39; di</text>
<text x="594.6" y="25.9" font-size="14" textLength="26.8" lengthAdjust="spacingAndGlyphs">Pale</text>
<text x="616.4" y="67.5" font-size="14" textLength="36.9" lengthAdjust="spacingAndGlyphs">Terno</text>
<text x="613.2" y="82.1" font-size="14" textLength="41.7" lengthAdjust="spacingAndGlyphs">d&#39;Isola</text>
<text x="518.8" y="102.7" font-size="14" textLength="33.9" lengthAdjust="spacingAndGlyphs">Solza</text>
<text x="510.3" y="121.4" font-size="14" textLength="64.8" lengthAdjust="spacingAndGlyphs">Medolago</text>
<text x="585.2" y="123.7" font-size="14" textLength="58.6" lengthAdjust="spacingAndGlyphs">Chignolo</text>
<text x="594.0" y="138.1" font-size="14" textLength="41.2" lengthAdjust="spacingAndGlyphs">d&#39;Isola</text>
<text x="671.0" y="86.1" font-size="14" textLength="45.9" lengthAdjust="spacingAndGlyphs">Bonate</text>
<text x="673.6" y="100.6" font-size="14" textLength="38.3" lengthAdjust="spacingAndGlyphs">Sopra</text>
<text x="677.9" y="123.7" font-size="14" textLength="46.0" lengthAdjust="spacingAndGlyphs">Bonate</text>
<text x="682.6" y="138.5" font-size="14" textLength="34.8" lengthAdjust="spacingAndGlyphs">Sotto</text>
<text x="479.1" y="151.9" font-size="14" textLength="35.9" lengthAdjust="spacingAndGlyphs">Porto</text>
<text x="474.9" y="166.1" font-size="14" textLength="44.3" lengthAdjust="spacingAndGlyphs">d&#39;Adda</text>
<text x="549.4" y="177.8" font-size="14" textLength="38.5" lengthAdjust="spacingAndGlyphs">Suisio</text>
<text x="654.1" y="188.1" font-size="14" textLength="51.5" lengthAdjust="spacingAndGlyphs">Madone</text>
<text x="698.0" y="9.7" font-size="14" textLength="42.4" lengthAdjust="spacingAndGlyphs">Locate</text>
<text x="75.9" y="196.8" font-size="14" textLength="42.5" lengthAdjust="spacingAndGlyphs">Lesmo</text>
<text x="-0.2" y="206.8" font-size="14" textLength="13.3" lengthAdjust="spacingAndGlyphs">co</text>
<text x="183.4" y="189.4" font-size="14" textLength="49.4" lengthAdjust="spacingAndGlyphs">Usmate</text>
<text x="188.0" y="203.7" font-size="14" textLength="40.1" lengthAdjust="spacingAndGlyphs">Velate</text>
<text x="215.8" y="226.4" font-size="14" textLength="49.8" lengthAdjust="spacingAndGlyphs">Cascina</text>
<text x="214.6" y="241.7" font-size="14" textLength="52.4" lengthAdjust="spacingAndGlyphs">Corrada</text>
<text x="131.9" y="243.7" font-size="14" textLength="48.4" lengthAdjust="spacingAndGlyphs">Bernate</text>
<text x="1.4" y="262.1" font-size="14" textLength="45.2" lengthAdjust="spacingAndGlyphs">assono</text>
<text x="108.3" y="280.7" font-size="14" textLength="42.1" lengthAdjust="spacingAndGlyphs">Arcore</text>
<text x="-0.2" y="329.3" font-size="14" textLength="37.1" lengthAdjust="spacingAndGlyphs">ano al</text>
<text x="-0.2" y="344.3" font-size="14" textLength="30.2" lengthAdjust="spacingAndGlyphs">mbro</text>
<text x="59.2" y="346.6" font-size="14" textLength="61.4" lengthAdjust="spacingAndGlyphs">Villasanta</text>
<text x="215.8" y="318.3" font-size="14" textLength="64.4" lengthAdjust="spacingAndGlyphs">Vimercate</text>
<text x="293.2" y="206.1" font-size="14" textLength="78.8" lengthAdjust="spacingAndGlyphs">Bernareggio</text>
<text x="359.1" y="233.8" font-size="14" textLength="52.2" lengthAdjust="spacingAndGlyphs">Sulbiate</text>
<text x="444.6" y="208.4" font-size="14" textLength="51.8" lengthAdjust="spacingAndGlyphs">Cornate</text>
<text x="447.5" y="221.8" font-size="14" textLength="46.2" lengthAdjust="spacingAndGlyphs">d&#39;Adda</text>
<text x="256.3" y="271.5" font-size="14" textLength="61.6" lengthAdjust="spacingAndGlyphs">Ruginello</text>
<text x="389.2" y="271.5" font-size="14" textLength="57.4" lengthAdjust="spacingAndGlyphs">Mezzago</text>
<text x="456.3" y="271.5" font-size="14" textLength="54.1" lengthAdjust="spacingAndGlyphs">Colnago</text>
<text x="292.1" y="290.0" font-size="14" textLength="81.3" lengthAdjust="spacingAndGlyphs">San Nazzaro</text>
<text x="345.6" y="308.5" font-size="14" textLength="52.8" lengthAdjust="spacingAndGlyphs">Bellusco</text>
<text x="442.8" y="318.5" font-size="14" textLength="55.6" lengthAdjust="spacingAndGlyphs">Busnago</text>
<text x="301.3" y="329.8" font-size="14" textLength="49.4" lengthAdjust="spacingAndGlyphs">Cascina</text>
<text x="300.9" y="344.3" font-size="14" textLength="50.9" lengthAdjust="spacingAndGlyphs">Rossino</text>
<text x="429.6" y="355.6" font-size="14" textLength="55.4" lengthAdjust="spacingAndGlyphs">Roncello</text>
<text x="237.6" y="365.1" font-size="14" textLength="61.1" lengthAdjust="spacingAndGlyphs">Burago di</text>
<text x="244.6" y="381.8" font-size="14" textLength="49.4" lengthAdjust="spacingAndGlyphs">Molgora</text>
<text x="529.9" y="233.8" font-size="14" textLength="64.9" lengthAdjust="spacingAndGlyphs">Bottanuco</text>
<text x="666.8" y="224.6" font-size="14" textLength="39.6" lengthAdjust="spacingAndGlyphs">Filago</text>
<text x="666.0" y="290.2" font-size="14" textLength="41.8" lengthAdjust="spacingAndGlyphs">Marne</text>
<text x="624.1" y="318.3" font-size="14" textLength="60.0" lengthAdjust="spacingAndGlyphs">Grignano</text>
<text x="581.6" y="339.2" font-size="14" textLength="41.0" lengthAdjust="spacingAndGlyphs">Trezzo</text>
<text x="571.6" y="353.8" font-size="14" textLength="59.0" lengthAdjust="spacingAndGlyphs">sull&#39;Adda</text>
<text x="655.6" y="355.7" font-size="14" textLength="61.2" lengthAdjust="spacingAndGlyphs">Brembate</text>
<text x="118.0" y="393.4" font-size="14" textLength="75.4" lengthAdjust="spacingAndGlyphs">Concorezzo</text>
<text x="83.3" y="423.9" font-size="14" textLength="80.1" lengthAdjust="spacingAndGlyphs">Malcantone-</text>
<text x="92.1" y="438.0" font-size="14" textLength="61.3" lengthAdjust="spacingAndGlyphs">Brambilla</text>
<text x="186.4" y="442.6" font-size="14" textLength="43.4" lengthAdjust="spacingAndGlyphs">Agrate</text>
<text x="184.6" y="457.0" font-size="14" textLength="47.0" lengthAdjust="spacingAndGlyphs">Brianza</text>
<text x="40.1" y="477.8" font-size="14" textLength="87.0" lengthAdjust="spacingAndGlyphs">San Damiano</text>
<text x="146.4" y="534.4" font-size="14" textLength="58.0" lengthAdjust="spacingAndGlyphs">Carugate</text>
<text x="227.3" y="487.3" font-size="14" textLength="65.6" lengthAdjust="spacingAndGlyphs">Caponago</text>
<text x="340.6" y="374.9" font-size="14" textLength="49.4" lengthAdjust="spacingAndGlyphs">Ornago</text>
<text x="318.6" y="414.1" font-size="14" textLength="79.5" lengthAdjust="spacingAndGlyphs">Cavenago di</text>
<text x="338.3" y="429.1" font-size="14" textLength="44.8" lengthAdjust="spacingAndGlyphs">Brianza</text>
<text x="426.2" y="404.9" font-size="14" textLength="49.5" lengthAdjust="spacingAndGlyphs">Cascina</text>
<text x="421.6" y="418.8" font-size="14" textLength="56.8" lengthAdjust="spacingAndGlyphs">Cattaneo</text>
<text x="238.9" y="439.6" font-size="14" textLength="43.5" lengthAdjust="spacingAndGlyphs">Omate</text>
<text x="332.1" y="468.5" font-size="14" textLength="66.5" lengthAdjust="spacingAndGlyphs">Cambiago</text>
<text x="445.4" y="468.5" font-size="14" textLength="50.4" lengthAdjust="spacingAndGlyphs">Basiano</text>
<text x="373.0" y="515.1" font-size="14" textLength="50.4" lengthAdjust="spacingAndGlyphs">Gessate</text>
<text x="240.1" y="545.3" font-size="14" textLength="80.1" lengthAdjust="spacingAndGlyphs">Pessano con</text>
<text x="513.3" y="403.2" font-size="14" textLength="59.3" lengthAdjust="spacingAndGlyphs">Grezzago</text>
<text x="500.8" y="423.9" font-size="14" textLength="57.6" lengthAdjust="spacingAndGlyphs">Trezzano</text>
<text x="514.2" y="438.1" font-size="14" textLength="30.4" lengthAdjust="spacingAndGlyphs">Rosa</text>
<text x="606.6" y="442.6" font-size="14" textLength="43.0" lengthAdjust="spacingAndGlyphs">Vaprio</text>
<text x="605.6" y="457.4" font-size="14" textLength="44.8" lengthAdjust="spacingAndGlyphs">d&#39;Adda</text>
<text x="632.8" y="486.6" font-size="14" textLength="41.6" lengthAdjust="spacingAndGlyphs">Airoldi</text>
<text x="507.3" y="505.5" font-size="14" textLength="44.1" lengthAdjust="spacingAndGlyphs">Bettola</text>
<text x="603.2" y="507.8" font-size="14" textLength="62.2" lengthAdjust="spacingAndGlyphs">Fara Gera</text>
<text x="612.0" y="521.7" font-size="14" textLength="45.2" lengthAdjust="spacingAndGlyphs">d&#39;Adda</text>
</g><g fill="#383838" opacity="0.97">
<text x="-0.2" y="422.8" font-size="18.5" textLength="35.6" lengthAdjust="spacingAndGlyphs">onza</text>
<text x="30.8" y="534.9" font-size="18.5" textLength="79.4" lengthAdjust="spacingAndGlyphs">Brugherio</text>
</g>
<text x="703" y="204" font-size="12" font-style="italic" fill="#5b8fd0">B</text>
<g fill="none" stroke-linejoin="round">
<path d="M139.2,294.0 L125.6,320.9" stroke="#ffffff" stroke-opacity="0.7" stroke-width="3.6"/>
<path d="M125.6,320.9 C126.0,321.7 126.6,323.9 128.0,325.5 C129.4,327.1 131.8,328.8 134.0,330.5 C136.2,332.2 138.4,333.8 141.0,335.5 C143.6,337.2 148.2,339.8 149.6,340.6" stroke="#ffffff" stroke-opacity="0.7" stroke-width="3.6"/>
<path d="M149.6,340.6 L160.0,342.6 L237.5,359.6 L239.0,358.0" stroke="#ffffff" stroke-opacity="0.7" stroke-width="3.6"/>
<path d="M239.0,358.0 L243.4,380.0 L260.9,391.3 L267.4,394.0" stroke="#ffffff" stroke-opacity="0.7" stroke-width="3.6"/>
<path d="M267.4,429.4 L336.5,429.6" stroke="#ffffff" stroke-opacity="0.7" stroke-width="3.6"/>
<path d="M336.5,429.6 L349.1,453.2 L356.0,440.2" stroke="#ffffff" stroke-opacity="0.7" stroke-width="3.6"/>
<path d="M356.0,440.2 C360.0,439.0 369.0,436.4 380.0,433.0 C391.0,429.6 406.3,424.4 422.0,419.8 C437.7,415.2 459.0,409.9 474.0,405.6 C489.0,401.4 502.5,397.1 512.0,394.3 C521.5,391.5 524.8,390.5 531.1,388.6 C537.5,386.7 543.8,385.1 550.1,382.9 C556.5,380.7 562.8,378.2 569.2,375.2 C575.6,372.2 581.9,368.0 588.3,364.7 C594.6,361.4 600.9,358.4 607.3,355.2 C613.6,352.0 620.0,349.0 626.4,345.7 C632.8,342.4 639.1,338.5 645.5,335.2 C651.9,331.9 658.1,328.7 664.5,325.7 C670.9,322.7 675.7,320.6 683.6,317.1 C691.5,313.7 707.3,307.0 712.0,305.0" stroke="#ffffff" stroke-opacity="0.7" stroke-width="3.6"/>
<path d="M139.2,294.0 L125.6,320.9" stroke="#0606c6" stroke-width="3.0" stroke-dasharray="4.8 3.3"/>
<path d="M125.6,320.9 C126.0,321.7 126.6,323.9 128.0,325.5 C129.4,327.1 131.8,328.8 134.0,330.5 C136.2,332.2 138.4,333.8 141.0,335.5 C143.6,337.2 148.2,339.8 149.6,340.6" stroke="#0606c6" stroke-width="3.0" stroke-dasharray="4.8 3.3"/>
<path d="M149.6,340.6 L160.0,342.6 L237.5,359.6 L239.0,358.0" stroke="#0606c6" stroke-width="3.0" stroke-dasharray="4.8 3.3"/>
<path d="M239.0,358.0 L243.4,380.0 L260.9,391.3 L267.4,394.0" stroke="#0606c6" stroke-width="3.0" stroke-dasharray="4.8 3.3"/>
<path d="M267.4,429.4 L336.5,429.6" stroke="#0606c6" stroke-width="3.0" stroke-dasharray="4.8 3.3"/>
<path d="M336.5,429.6 L349.1,453.2 L356.0,440.2" stroke="#0606c6" stroke-width="3.0" stroke-dasharray="4.8 3.3"/>
<path d="M356.0,440.2 C360.0,439.0 369.0,436.4 380.0,433.0 C391.0,429.6 406.3,424.4 422.0,419.8 C437.7,415.2 459.0,409.9 474.0,405.6 C489.0,401.4 502.5,397.1 512.0,394.3 C521.5,391.5 524.8,390.5 531.1,388.6 C537.5,386.7 543.8,385.1 550.1,382.9 C556.5,380.7 562.8,378.2 569.2,375.2 C575.6,372.2 581.9,368.0 588.3,364.7 C594.6,361.4 600.9,358.4 607.3,355.2 C613.6,352.0 620.0,349.0 626.4,345.7 C632.8,342.4 639.1,338.5 645.5,335.2 C651.9,331.9 658.1,328.7 664.5,325.7 C670.9,322.7 675.7,320.6 683.6,317.1 C691.5,313.7 707.3,307.0 712.0,305.0" stroke="#0606c6" stroke-width="3.0" stroke-dasharray="4.8 3.3"/>
</g>
<g transform="translate(128.0,278.8)"><path d="M0,0 C-1.6,-7.5 -12.6,-15.5 -12.6,-24.6 A12.6,12.6 0 1 1 12.6,-24.6 C12.6,-15.5 1.6,-7.5 0,0 Z" fill="#a2a2a2" stroke="#161616" stroke-width="1.35"/><circle cx="0" cy="-24.4" r="4.3" fill="#0a0203"/></g>
<g transform="translate(137.7,294.9)"><path d="M0,0 C-1.6,-7.5 -12.6,-15.5 -12.6,-24.6 A12.6,12.6 0 1 1 12.6,-24.6 C12.6,-15.5 1.6,-7.5 0,0 Z" fill="#a2a2a2" stroke="#161616" stroke-width="1.35"/><circle cx="0" cy="-24.4" r="4.3" fill="#0a0203"/></g>
<g transform="translate(124.7,319.4)"><path d="M0,0 C-1.6,-7.5 -12.6,-15.5 -12.6,-24.6 A12.6,12.6 0 1 1 12.6,-24.6 C12.6,-15.5 1.6,-7.5 0,0 Z" fill="#fb2024" stroke="#8a0f12" stroke-width="1.1"/><circle cx="0" cy="-24.4" r="4.3" fill="#0a0203"/></g>
<g transform="translate(149.5,337.0)"><path d="M0,0 C-1.6,-7.5 -12.6,-15.5 -12.6,-24.6 A12.6,12.6 0 1 1 12.6,-24.6 C12.6,-15.5 1.6,-7.5 0,0 Z" fill="#3c3cd8" stroke="#15156e" stroke-width="1.15"/><circle cx="0" cy="-24.4" r="4.3" fill="#0a0203"/></g>
<g transform="translate(238.8,357.0)"><path d="M0,0 C-1.6,-7.5 -12.6,-15.5 -12.6,-24.6 A12.6,12.6 0 1 1 12.6,-24.6 C12.6,-15.5 1.6,-7.5 0,0 Z" fill="#3c3cd8" stroke="#15156e" stroke-width="1.15"/><circle cx="0" cy="-24.4" r="4.3" fill="#0a0203"/></g>
<g transform="translate(243.4,379.2)"><path d="M0,0 C-1.6,-7.5 -12.6,-15.5 -12.6,-24.6 A12.6,12.6 0 1 1 12.6,-24.6 C12.6,-15.5 1.6,-7.5 0,0 Z" fill="#3c3cd8" stroke="#15156e" stroke-width="1.15"/><circle cx="0" cy="-24.4" r="4.3" fill="#0a0203"/></g>
<g transform="translate(267.4,393.8)"><path d="M0,0 C-1.6,-7.5 -12.6,-15.5 -12.6,-24.6 A12.6,12.6 0 1 1 12.6,-24.6 C12.6,-15.5 1.6,-7.5 0,0 Z" fill="#3c3cd8" stroke="#15156e" stroke-width="1.15"/><circle cx="0" cy="-24.4" r="4.3" fill="#0a0203"/></g>
<g transform="translate(267.4,427.5)"><path d="M0,0 C-1.6,-7.5 -12.6,-15.5 -12.6,-24.6 A12.6,12.6 0 1 1 12.6,-24.6 C12.6,-15.5 1.6,-7.5 0,0 Z" fill="#3c3cd8" stroke="#15156e" stroke-width="1.15"/><circle cx="0" cy="-24.4" r="4.3" fill="#0a0203"/></g>
<g transform="translate(338.8,425.8)"><path d="M0,0 C-1.6,-7.5 -12.6,-15.5 -12.6,-24.6 A12.6,12.6 0 1 1 12.6,-24.6 C12.6,-15.5 1.6,-7.5 0,0 Z" fill="#3c3cd8" stroke="#15156e" stroke-width="1.15"/><circle cx="0" cy="-24.4" r="4.3" fill="#0a0203"/></g>
<g transform="translate(349.1,453.0)"><path d="M0,0 C-1.6,-7.5 -12.6,-15.5 -12.6,-24.6 A12.6,12.6 0 1 1 12.6,-24.6 C12.6,-15.5 1.6,-7.5 0,0 Z" fill="#3c3cd8" stroke="#15156e" stroke-width="1.15"/><circle cx="0" cy="-24.4" r="4.3" fill="#0a0203"/></g>
<g transform="translate(354.5,437.4)"><path d="M0,0 C-1.6,-7.5 -12.6,-15.5 -12.6,-24.6 A12.6,12.6 0 1 1 12.6,-24.6 C12.6,-15.5 1.6,-7.5 0,0 Z" fill="#3c3cd8" stroke="#15156e" stroke-width="1.15"/><circle cx="0" cy="-24.4" r="4.3" fill="#0a0203"/></g>
<g transform="translate(550.1,382.9)"><path d="M0,0 C-1.6,-7.5 -12.6,-15.5 -12.6,-24.6 A12.6,12.6 0 1 1 12.6,-24.6 C12.6,-15.5 1.6,-7.5 0,0 Z" fill="#3c3cd8" stroke="#15156e" stroke-width="1.15"/><circle cx="0" cy="-24.4" r="4.3" fill="#0a0203"/></g>
<g fill="#3c3c3c" font-weight="700" opacity="0.98">
<text x="103.6" y="234.1" font-size="13" textLength="48.2" lengthAdjust="spacingAndGlyphs">RPT001</text>
<text x="159.8" y="286.1" font-size="13" textLength="48.6" lengthAdjust="spacingAndGlyphs">RPT081</text>
<text x="572.6" y="374.3" font-size="13" textLength="49.4" lengthAdjust="spacingAndGlyphs">RPT955</text>
</g>
<text x="487.6" y="535.4" font-size="11.5" fill="#fbfaf7" stroke="#fbfaf7" stroke-width="2.4" stroke-linejoin="round" opacity="0.8" textLength="71.0" lengthAdjust="spacingAndGlyphs">© 2017 HERE,</text>
<text x="564.0" y="535.4" font-size="11.5" fill="#fbfaf7" stroke="#fbfaf7" stroke-width="2.4" stroke-linejoin="round" opacity="0.8" textLength="157.5" lengthAdjust="spacingAndGlyphs">© 2017 Microsoft Corporation</text>
<text x="487.6" y="535.4" font-size="11.5" fill="#262626" stroke="#262626" stroke-width="0.25" opacity="0.98" textLength="71.0" lengthAdjust="spacingAndGlyphs">© 2017 HERE,</text>
<text x="564.0" y="535.4" font-size="11.5" fill="#262626" stroke="#262626" stroke-width="0.25" opacity="0.98" textLength="157.5" lengthAdjust="spacingAndGlyphs">© 2017 Microsoft Corporation</text>
</svg>
</div>
<div id="bar">
<svg width="1399" height="49" viewBox="0 0 1399 49" fill="none" stroke="#111" stroke-width="1.4" stroke-linecap="butt" stroke-linejoin="miter">
<path d="M659.45,15.40 L662.24,22.36 L669.72,22.86 L663.97,27.67 L665.80,34.94 L659.45,30.95 L653.10,34.94 L654.93,27.67 L649.18,22.86 L656.66,22.36Z M659.45,19.40 L661.21,23.78 L665.92,24.10 L662.30,27.12 L663.45,31.70 L659.45,29.19 L655.45,31.70 L656.60,27.12 L652.98,24.10 L657.69,23.78Z" fill="#111" fill-rule="evenodd" stroke="none"/>
<path d="M739.3,15.10 L730.9,23.20 M730.8,17.70 V23.30 H737.1 M719.1,34.80 L727.6,26.60 M721.3,26.40 H727.7 V32.60" stroke-width="1.5"/>
<path d="M830.8,15.90 L832.9,19.90 H828.7 Z M830.8,19.90 V27.80 M830.8,27.20 L834.0,30.60 V33.80 L830.8,31.20 L827.6,33.80 V30.60 Z" stroke-width="1.3" stroke-linejoin="miter"/>
<circle cx="900.6" cy="19.00" r="4.1"/><path d="M900.6,23.10 V34.50"/>
<circle cx="970.3" cy="18.20" r="2.1" stroke-width="1.3"/><path d="M970.3,20.30 V29.70 M965.9,24.90 H974.7 L979.0,33.60 H961.7 Z"/>
<circle cx="1070.1" cy="21.60" r="6.4" stroke-width="1.3"/><path d="M1074.7,26.20 L1083.2,34.60 M1067.2,21.60 H1073.1 M1070.1,18.70 V24.60" stroke-width="1.35"/>
<circle cx="1139.6" cy="21.60" r="6.4" stroke-width="1.3"/><path d="M1144.2,26.20 L1152.7,34.60 M1136.7,21.60 H1142.6" stroke-width="1.35"/>
<circle cx="1212.6" cy="25.00" r="8.5"/><circle cx="1212.6" cy="25.00" r="3.8" fill="#111" stroke="none"/>
<path d="M1306.6,33.30 L1323.7,16.60 M1318.2,16.60 H1323.8 V22.00 M1306.5,27.90 V33.50 H1312.3" stroke-width="1.5"/>
<rect x="1367.00" y="24.90" width="2.2" height="2.2" fill="#0d0d3c" stroke="none"/>
<rect x="1373.40" y="24.90" width="2.2" height="2.2" fill="#0d0d3c" stroke="none"/>
<rect x="1379.70" y="24.90" width="2.2" height="2.2" fill="#0d0d3c" stroke="none"/>
</svg>
</div>
<div id="barline"></div>
</div></body></html>
